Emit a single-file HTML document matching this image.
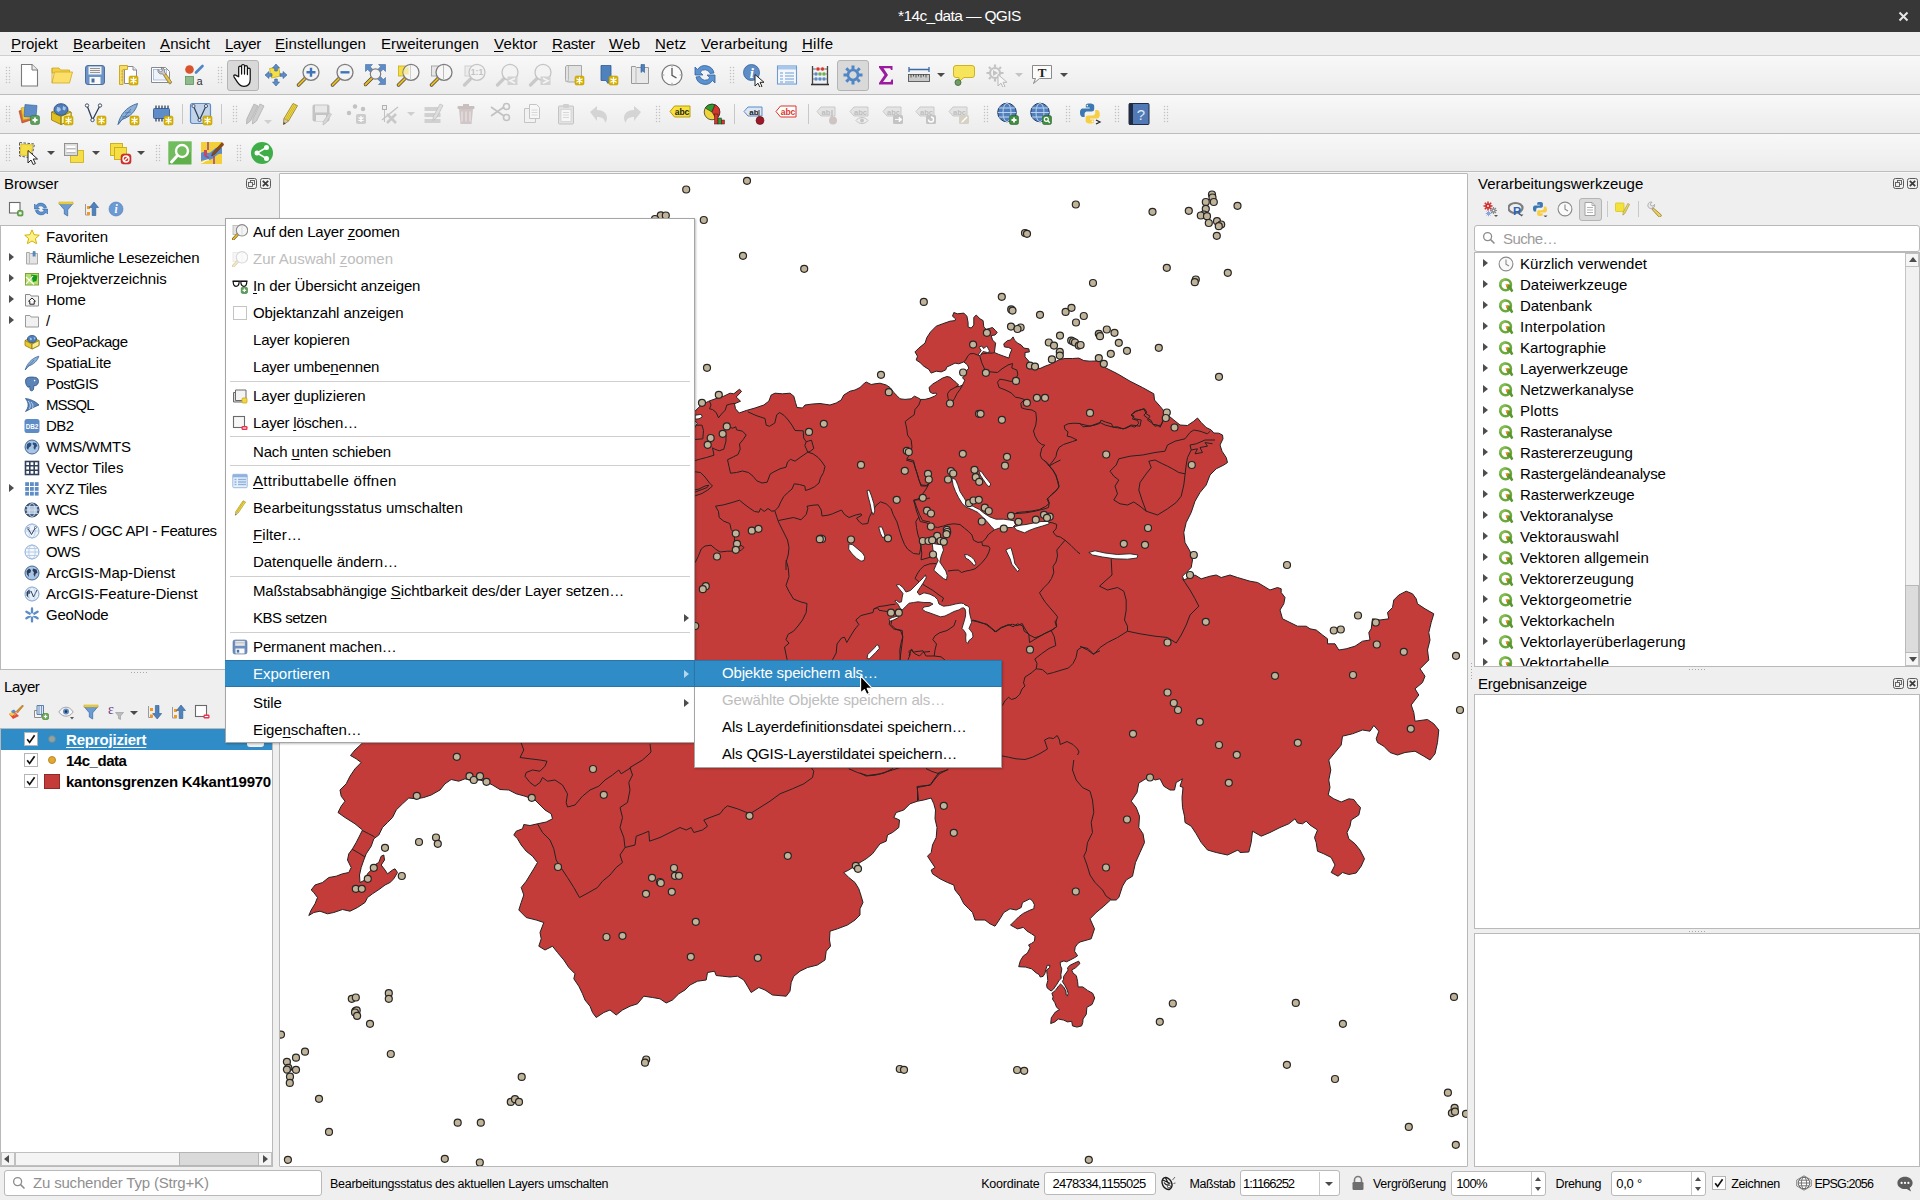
<!DOCTYPE html>
<html lang="de"><head><meta charset="utf-8"><title>*14c_data — QGIS</title>
<style>
*{box-sizing:border-box;margin:0;padding:0}
html,body{width:1920px;height:1200px;overflow:hidden;background:#efefef;font-family:"Liberation Sans",sans-serif;font-size:15px;color:#000;}
body{position:relative}
.a{position:absolute;white-space:nowrap}
u{text-decoration:underline;text-underline-offset:2px;text-decoration-thickness:1px}
#title{left:0;top:0;width:1920px;height:32px;background:#373737;color:#fff;text-align:center;line-height:31px;font-size:15.5px}
#menubar{left:0;top:32px;width:1920px;height:24px;background:#efefef;border-bottom:1px solid #cfcfcf}
#menubar span{position:absolute;top:3px;font-size:15px;line-height:18px}
.tb{left:0;width:1920px;height:39px;background:linear-gradient(#f8f8f8,#ececec);border-bottom:1px solid #bdbdbd}
.grip{position:absolute;width:6px;height:18px;background-image:radial-gradient(circle,#c2c2c2 0.75px,transparent 1.05px);background-size:3px 3px}
.ic{position:absolute;width:24px;height:24px}
.ic16{position:absolute;width:16px;height:16px}
.tsep{position:absolute;width:1px;height:20px;background:#c8c8c8}
.pressed{position:absolute;background:#d9d9d9;border:1px solid #b4b4b4;border-radius:3px}
.dd{position:absolute;width:0;height:0;border-left:4px solid transparent;border-right:4px solid transparent;border-top:4px solid #4a4a4a}
.ptitle{font-size:15px;line-height:18px}
.tree{background:#fff;border:1px solid #b9b9b9}
.row{position:absolute;left:0;height:21px;line-height:21px;font-size:15px}
.arr{position:absolute;width:0;height:0;border-top:4px solid transparent;border-bottom:4px solid transparent;border-left:5px solid #4d4d4d}
.dockbtn{position:absolute;width:11px;height:11px;border:1px solid #555;border-radius:2px}
.menu{background:#fff;border:1px solid #a5a5a5;box-shadow:1px 1px 2px rgba(0,0,0,.25)}
.mi{position:absolute;left:27px;font-size:15px;line-height:18px;color:#000}
.mi.dis{color:#bdbdbd}
.msep{position:absolute;left:4px;right:4px;height:1px;background:#cfcfcf}
.sb{font-size:13px;line-height:16px}
.inp{background:#fff;border:1px solid #b9b9b9;border-radius:3px}
</style></head><body>

<div class="a" id="title"></div>
<div class="a" style="left:898px;top:7px;color:#fff;line-height:18px;font-size:15.5px;letter-spacing:-0.624px;">*14c_data — QGIS</div>
<svg class="a" style="left:1898px;top:11px" width="11" height="11" viewBox="0 0 11 11"><path d="M1.5 1.5L9.5 9.5M9.5 1.5L1.5 9.5" stroke="#e6e6e6" stroke-width="2" fill="none"/></svg>
<div class="a" id="menubar"><span style="left:11px;font-size:15px;letter-spacing:0.002px;"><u>P</u>rojekt</span><span style="left:73px;font-size:15px;letter-spacing:0.015px;"><u>B</u>earbeiten</span><span style="left:160px;font-size:15px;letter-spacing:0.116px;"><u>A</u>nsicht</span><span style="left:225px;font-size:15px;letter-spacing:-0.304px;"><u>L</u>ayer</span><span style="left:275px;font-size:15px;letter-spacing:0.072px;"><u>E</u>instellungen</span><span style="left:381px;font-size:15px;letter-spacing:0.098px;">Er<u>w</u>eiterungen</span><span style="left:494px;font-size:15px;letter-spacing:0.196px;"><u>V</u>ektor</span><span style="left:552px;font-size:15px;letter-spacing:-0.197px;"><u>R</u>aster</span><span style="left:609px;font-size:15px;letter-spacing:0.310px;"><u>W</u>eb</span><span style="left:655px;font-size:15px;letter-spacing:0.114px;"><u>N</u>etz</span><span style="left:701px;font-size:15px;letter-spacing:0.136px;"><u>V</u>erarbeitung</span><span style="left:802px;font-size:15px;letter-spacing:0.258px;"><u>H</u>ilfe</span></div>
<div class="a tb" style="top:56px;height:39px"></div>
<div class="a tb" style="top:95px;height:39px"></div>
<div class="a tb" style="top:134px;height:38px"></div>
<div class="a" style="left:0;top:172px;width:1920px;height:1px;background:#f6f6f6"></div>
<div class="grip" style="left:5px;top:66px"></div>
<svg class="ic" style="left:17px;top:63px" viewBox="0 0 24 24"><path d="M4.500 1.500h10.500l5.500 5.500v16h-16z" fill="#fff" stroke="#7a7a7a" stroke-width="1.100"/><path d="M15 1.500v5.500h5.500" fill="#ececec" stroke="#7a7a7a" stroke-width="1"/></svg>
<svg class="ic" style="left:50px;top:63px" viewBox="0 0 24 24"><path d="M2 5h7l1.500 2h9v3h-17.500z" fill="#f2cf4a" stroke="#d1a91c" stroke-width=".8"/><path d="M2 20l2.500-11h18l-3 11z" fill="#fbdf6a" stroke="#d1a91c" stroke-width=".8"/><path d="M2 5v15" stroke="#d1a91c" stroke-width=".8"/></svg>
<svg class="ic" style="left:83px;top:63px" viewBox="0 0 24 24"><rect x="2.500" y="2.500" width="19" height="19" rx="2.500" fill="#6c93c7" stroke="#4a6f9f" stroke-width="1"/><rect x="5.500" y="3.500" width="13" height="8" fill="#f1f1f1"/><path d="M7 5.500h10M7 7.500h10M7 9.500h10" stroke="#8a8a8a" stroke-width=".9"/><rect x="6.500" y="14" width="11" height="7" fill="#fafafa"/><rect x="8.500" y="15.500" width="3" height="4" fill="#4a6f9f"/></svg>
<svg class="ic" style="left:116px;top:63px" viewBox="0 0 24 24"><path d="M8.500 3.500h8.500l3.500 3.500v13.500h-12z" fill="#fff" stroke="#8a8a8a"/><path d="M17 3.500v3.500h3.500" fill="#eee" stroke="#8a8a8a"/><path d="M3.500 2.500h8v4h-4.500v15h-3.500z" fill="#f6dd6a" stroke="#c9a417" stroke-width=".9"/><path d="M5 8h2M5 11h2M5 14h2M5 17h2" stroke="#c9a417" stroke-width=".8"/><rect x="13" y="13" width="9" height="9" rx="1.600" fill="#d9b300" stroke="#b39400" stroke-width=".5"/><g stroke="#fff" stroke-width="1.400" stroke-linecap="round"><path d="M17.5 14.5V20.5M14.9 16.0L20.1 19.0M20.1 16.0L14.9 19.0"/></g></svg>
<svg class="ic" style="left:149px;top:63px" viewBox="0 0 24 24"><path d="M2.500 4.500h14l4 4v11h-18z" fill="#fff" stroke="#8a8a8a"/><rect x="4.500" y="6.500" width="13" height="10.500" fill="#eef2fb" stroke="#9db3dd" stroke-width=".8"/><path d="M9 6.500a3.500 3.500 0 0 0 4.500 4.300L20 20.500a1.500 1.500 0 0 0 2.200-2L15.500 9A3.500 3.500 0 0 0 12 4.500L13.500 7.500 11.500 9z" fill="#c8c8c8" stroke="#6a6a6a" stroke-width=".7"/><path d="M15 12.500l5 7.500a1.500 1.500 0 0 0 2.200-1.500L17 11z" fill="#e8c44a" stroke="#9a7d1c" stroke-width=".6"/></svg>
<svg class="ic" style="left:182px;top:63px" viewBox="0 0 24 24"><circle cx="7.500" cy="6.500" r="4.300" fill="#d9532c"/><path d="M14 9.500L20.500 3" stroke="#4f86c6" stroke-width="2.600" stroke-linecap="round"/><rect x="3.500" y="13.500" width="8" height="8" fill="#8dbb8d" stroke="#5c935c" stroke-width=".8"/><text x="14.500" y="21.500" font-family="Liberation Sans" font-size="11" fill="#333">a</text></svg>
<div class="grip" style="left:217px;top:66px"></div>
<div class="pressed" style="left:227px;top:60px;width:32px;height:31px"></div>
<svg class="ic" style="left:231px;top:63px" viewBox="0 0 24 24"><g transform="translate(-1.5 -1.3) scale(1.12)"><path d="M8.200 13.500V5.200a1.300 1.300 0 0 1 2.600 0V11V3.800a1.300 1.300 0 0 1 2.600 0V11V4.800a1.300 1.300 0 0 1 2.600 0V11.500V7a1.250 1.250 0 0 1 2.500 0v9c0 3.500-2 6-5.500 6-3 0-4.300-1.200-5.800-3.500L4 13.500c-.7-1.300.8-2.300 1.800-1.300z" fill="#fff" stroke="#111" stroke-width="1.100" stroke-linejoin="round"/></g></svg>
<svg class="ic" style="left:264px;top:63px" viewBox="0 0 24 24"><path d="M5.500 5.500l9-1.500 2 9-9 2z" fill="#f5de46" stroke="#c9ad12" stroke-width=".8"/><g fill="#5d8cc6" stroke="#335f99" stroke-width=".6"><path d="M12 1l3.500 4h-2.200v3h-2.600v-3H8.500z"/><path d="M12 23l3.500-4h-2.200v-3h-2.600v3H8.500z"/><path d="M1 12l4-3.500v2.200h3v2.600h-3v2.200z"/><path d="M23 12l-4-3.500v2.200h-3v2.600h3v2.200z"/></g></svg>
<svg class="ic" style="left:296px;top:63px" viewBox="0 0 24 24"><path d="M9 15.500L2.500 22" stroke="#3a3a3a" stroke-width="3.400" stroke-linecap="round"/><path d="M9 15.500L2.500 22" stroke="#e8b923" stroke-width="2.200" stroke-linecap="round"/><circle cx="15" cy="9.300" r="8" fill="#f3f3f3" stroke="#7c7c7c" stroke-width="1.300"/><path d="M15 4.800v9M10.500 9.300h9" stroke="#3f74b8" stroke-width="2.400"/></svg>
<svg class="ic" style="left:330px;top:63px" viewBox="0 0 24 24"><path d="M9 15.500L2.500 22" stroke="#3a3a3a" stroke-width="3.400" stroke-linecap="round"/><path d="M9 15.500L2.500 22" stroke="#e8b923" stroke-width="2.200" stroke-linecap="round"/><circle cx="15" cy="9.300" r="8" fill="#f3f3f3" stroke="#7c7c7c" stroke-width="1.300"/><path d="M10.500 9.300h9" stroke="#3f74b8" stroke-width="2.400"/></svg>
<svg class="ic" style="left:363px;top:63px" viewBox="0 0 24 24"><g fill="#5d8cc6" stroke="#335f99" stroke-width=".5"><path d="M2.500 1.500h7l-2.300 2.300 3.300 3.300-2.600 2.600-3.300-3.300-2.100 2.100z"/><path d="M22.500 1.500v7l-2.300-2.300-3.300 3.300-2.600-2.600 3.300-3.300-2.100-2.100z"/><path d="M22.500 21.500h-7l2.300-2.300-3.300-3.300 2.600-2.600 3.300 3.300 2.100-2.100z"/></g><path d="M9.500 14.500L2.500 21.500" stroke="#3a3a3a" stroke-width="3.400" stroke-linecap="round"/><path d="M9.500 14.500L2.500 21.500" stroke="#e8b923" stroke-width="2.200" stroke-linecap="round"/><circle cx="12.500" cy="11" r="5.200" fill="#f3f3f3" stroke="#7c7c7c" stroke-width="1.200"/></svg>
<svg class="ic" style="left:396px;top:63px" viewBox="0 0 24 24"><rect x="2.500" y="3" width="10" height="10" fill="#f5de46" stroke="#c9ad12" stroke-width=".8"/><path d="M9 15.500L2.500 22" stroke="#3a3a3a" stroke-width="3.400" stroke-linecap="round"/><path d="M9 15.500L2.500 22" stroke="#e8b923" stroke-width="2.200" stroke-linecap="round"/><circle cx="15" cy="9.300" r="8" fill="#f6f6f6" stroke="#7c7c7c" stroke-width="1.300"/><path d="M14.500 2v14" stroke="#cfcfcf" stroke-width="1"/><path d="M7.600 7a7.300 7.300 0 0 0 0 4.500h5V3.500z" fill="#f5e78a" opacity=".8"/></svg>
<svg class="ic" style="left:429px;top:63px" viewBox="0 0 24 24"><rect x="2.500" y="3" width="10" height="10" fill="#e6e6e6" stroke="#9a9a9a" stroke-width=".8"/><path d="M9 15.500L2.500 22" stroke="#3a3a3a" stroke-width="3.400" stroke-linecap="round"/><path d="M9 15.500L2.500 22" stroke="#e8b923" stroke-width="2.200" stroke-linecap="round"/><circle cx="15" cy="9.300" r="8" fill="#f6f6f6" stroke="#7c7c7c" stroke-width="1.300"/><path d="M14.500 2v14" stroke="#bdbdbd" stroke-width="1"/></svg>
<svg class="ic" style="left:462px;top:63px" viewBox="0 0 24 24"><rect x="3" y="3" width="10" height="10" fill="#ececec" stroke="#d0d0d0"/><path d="M9 15.500L2.500 22" stroke="#c9c9c9" stroke-width="3.200" stroke-linecap="round"/><circle cx="15" cy="9.300" r="8" fill="#f3f3f3" stroke="#c4c4c4" stroke-width="1.300"/><text x="15" y="12.300" font-family="Liberation Sans" font-weight="bold" font-size="8.500" text-anchor="middle" fill="#c2c2c2">1:1</text></svg>
<svg class="ic" style="left:495px;top:63px" viewBox="0 0 24 24"><path d="M9 15.500L2.500 22" stroke="#c9c9c9" stroke-width="3.200" stroke-linecap="round"/><circle cx="15" cy="9.300" r="8" fill="#f3f3f3" stroke="#c4c4c4" stroke-width="1.300"/><rect x="12.500" y="13.500" width="10" height="8.500" fill="#d2d2d2"/><path d="M20 15.300l-5 2.500 5 2.500" stroke="#f4f4f4" stroke-width="1.700" fill="none"/></svg>
<svg class="ic" style="left:528px;top:63px" viewBox="0 0 24 24"><path d="M9 15.500L2.500 22" stroke="#c9c9c9" stroke-width="3.200" stroke-linecap="round"/><circle cx="15" cy="9.300" r="8" fill="#f3f3f3" stroke="#c4c4c4" stroke-width="1.300"/><rect x="12.500" y="13.500" width="10" height="8.500" fill="#d2d2d2"/><path d="M15 15.300l5 2.500-5 2.500" stroke="#f4f4f4" stroke-width="1.700" fill="none"/></svg>
<svg class="ic" style="left:562px;top:63px" viewBox="0 0 24 24"><path d="M5 2.500h14.500v16.500H7c-2.500 0-3.500-1-3.500-2.500V5c0-1.500.5-2.500 1.500-2.500z" fill="#e2e2e2" stroke="#a0a0a0" stroke-width=".9"/><path d="M6.500 2.500v14c0 1.500-1 2-3 2" fill="none" stroke="#b4b4b4" stroke-width=".9"/><rect x="13" y="13" width="9" height="9" rx="1.600" fill="#d9b300" stroke="#b39400" stroke-width=".5"/><g stroke="#fff" stroke-width="1.400" stroke-linecap="round"><path d="M17.5 14.5V20.5M14.9 16.0L20.1 19.0M20.1 16.0L14.9 19.0"/></g></svg>
<svg class="ic" style="left:596px;top:63px" viewBox="0 0 24 24"><path d="M5 2.500h10v14l-3 4-2-3H5z" fill="#4f82bd" stroke="#2d5a94" stroke-width=".8"/><rect x="13" y="13" width="9" height="9" rx="1.600" fill="#d9b300" stroke="#b39400" stroke-width=".5"/><g stroke="#fff" stroke-width="1.400" stroke-linecap="round"><path d="M17.5 14.5V20.5M14.9 16.0L20.1 19.0M20.1 16.0L14.9 19.0"/></g></svg>
<svg class="ic" style="left:628px;top:63px" viewBox="0 0 24 24"><path d="M3.500 3.500h4l1 1h12v16h-17z" fill="#e8e8e8" stroke="#9a9a9a"/><path d="M8 4v16.500" stroke="#b9b9b9"/><path d="M13 1.500h3.500v8l-1.750-1.500L13 9.500z" fill="#4f82bd" stroke="#2d5a94" stroke-width=".6"/></svg>
<svg class="ic" style="left:660px;top:63px" viewBox="0 0 24 24"><circle cx="12" cy="12" r="10" fill="#fafafa" stroke="#7a7a7a" stroke-width="1.200"/><path d="M12 5v7.300l4.500 2.700" fill="none" stroke="#555" stroke-width="1.300"/><g stroke="#9a9a9a" stroke-width="1"><path d="M12 2.800v1.500M12 19.700v1.500M2.800 12h1.500M19.700 12h1.500"/></g></svg>
<svg class="ic" style="left:693px;top:63px" viewBox="0 0 24 24"><path d="M21 10A9.200 9.200 0 0 0 4.500 6.500L2 4v8h8L7.200 9.200A5.500 5.500 0 0 1 17 10.500z" fill="#5b92d0" stroke="#2f62a1" stroke-width=".8"/><path d="M3 14a9.200 9.200 0 0 0 16.500 3.500L22 20v-8h-8l2.800 2.800A5.500 5.500 0 0 1 7 13.500z" fill="#5b92d0" stroke="#2f62a1" stroke-width=".8"/></svg>
<div class="grip" style="left:729px;top:66px"></div>
<div class="pressed" style="left:837px;top:60px;width:32px;height:31px"></div>
<svg class="ic" style="left:742px;top:63px" viewBox="0 0 24 24"><circle cx="9.500" cy="9.500" r="8" fill="#5d8cc6" stroke="#335f99" stroke-width=".8"/><text x="9.800" y="15" font-family="Liberation Serif" font-style="italic" font-weight="bold" font-size="15" fill="#fff" text-anchor="middle">i</text><path d="M13 11.500V23l3-2.800 2 4.300 2-1-2-4.200h4z" fill="#fff" stroke="#222" stroke-width="1"/></svg>
<svg class="ic" style="left:775px;top:63px" viewBox="0 0 24 24"><rect x="2.500" y="3" width="19" height="18" fill="#f4f8fd" stroke="#6f9bd3" stroke-width="1.100"/><rect x="3" y="3.500" width="18" height="3" fill="#a9c7ea"/><g stroke="#6f9bd3" stroke-width="1.200"><path d="M5 10h3M10 10h9M5 13h3M10 13h9M5 16h3M10 16h9M5 19h3M10 19h9"/></g></svg>
<svg class="ic" style="left:808px;top:63px" viewBox="0 0 24 24"><path d="M3 21.500h18" stroke="#333" stroke-width="1.600"/><path d="M4.500 3v18M19.500 3v18" stroke="#444" stroke-width="1.300"/><path d="M4.500 6h15M4.500 11h15M4.500 16h15" stroke="#555" stroke-width=".9"/><g stroke="#fff" stroke-width=".4"><circle cx="10" cy="6" r="2" fill="#d9342b"/><circle cx="14.500" cy="6" r="2" fill="#d9342b"/><circle cx="8" cy="11" r="2" fill="#5d8cc6"/><circle cx="12" cy="11" r="2" fill="#6fae58"/><circle cx="16" cy="11" r="2" fill="#6fae58"/><circle cx="8" cy="16" r="2" fill="#5d8cc6"/><circle cx="12" cy="16" r="2" fill="#5d8cc6"/><circle cx="16" cy="16" r="2" fill="#5d8cc6"/></g></svg>
<svg class="ic" style="left:841px;top:63px" viewBox="0 0 24 24"><g transform="translate(12 12)" fill="none" stroke="#4f86c6" stroke-width="2.600"><circle r="5"/><path d="M0-9.500V-6M0 9.500V6M9.500 0H6M-9.500 0H-6M6.700-6.700L4.300-4.300M-6.700 6.700L-4.300 4.300M6.700 6.700L4.300 4.300M-6.700-6.700L-4.300-4.300" stroke-width="3"/></g><circle cx="12" cy="12" r="2.200" fill="#d9d9d9"/></svg>
<svg class="ic" style="left:874px;top:63px" viewBox="0 0 24 24"><path d="M5 3h13.500v4h-1.500l-.8-1.800H9.500L14 12l-5 7h7.500l1-2.500H19V21.500H5V20l5.500-8L5 4.500z" fill="#9a1aa0"/></svg>
<svg class="ic" style="left:907px;top:63px" viewBox="0 0 24 24"><rect x="1.500" y="11.500" width="21" height="7" fill="#c9c9c9" stroke="#555" stroke-width=".9"/><path d="M4 11.500v3M6.500 11.500v2M9 11.500v3M11.500 11.500v2M14 11.500v3M16.500 11.500v2M19 11.500v3" stroke="#333" stroke-width=".8"/><path d="M2 6.500h20M2 4v5M22 4v5" stroke="#3b6aa6" stroke-width="1.300"/></svg>
<svg class="ic" style="left:952px;top:63px" viewBox="0 0 24 24"><path d="M4 2.500h16a2.500 2.500 0 0 1 2.500 2.500v7a2.500 2.500 0 0 1-2.500 2.500h-8l-5 4v-4H4A2.500 2.500 0 0 1 1.500 12V5A2.500 2.500 0 0 1 4 2.500z" fill="#f6e45a" stroke="#c9ad12" stroke-width=".9"/><circle cx="6" cy="19.500" r="3" fill="#6f9f5f" stroke="#3f5f3f" stroke-width=".8"/></svg>
<svg class="ic" style="left:985px;top:63px" viewBox="0 0 24 24" opacity="0.45"><g transform="translate(10 10)" fill="none" stroke="#8a8a8a" stroke-width="2.200"><circle r="5"/><path d="M0-8.500V-6M0 8.500V6M8.500 0H6M-8.500 0H-6M6-6L4.300-4.300M-6 6L-4.300 4.300M6 6L4.300 4.300M-6-6L-4.300-4.300"/></g><path d="M8 7l5 3-5 3z" fill="#8a8a8a"/><path d="M13 11.500V23l3-2.800 2 4.300 2-1-2-4.200h4z" fill="#fff" stroke="#777" stroke-width="1"/></svg>
<svg class="ic" style="left:1030px;top:63px" viewBox="0 0 24 24"><path d="M2.500 2.500h19v13h-12l-6 5 2-5h-3z" fill="#fbfbfb" stroke="#8a8a8a" stroke-width="1"/><text x="12" y="13.500" font-family="Liberation Serif" font-weight="bold" font-size="13" text-anchor="middle" fill="#222">T</text></svg>
<div class="dd" style="left:937px;top:73px;border-top-color:#4a4a4a"></div>
<div class="dd" style="left:1015px;top:73px;border-top-color:#c4c4c4"></div>
<div class="dd" style="left:1060px;top:73px;border-top-color:#4a4a4a"></div>
<div class="grip" style="left:5px;top:105px"></div>
<svg class="ic" style="left:17px;top:102px" viewBox="0 0 24 24"><path d="M2 9l9-3 3 12-9 3z" fill="#d9623a" stroke="#a8421f" stroke-width=".6"/><path d="M4 6l10-2 2 12-10 2z" fill="#f0c93a" stroke="#b8951a" stroke-width=".6"/><path d="M8 2.500l12 1-1 12-12-1z" fill="#5d8cc6" stroke="#335f99" stroke-width=".6"/><rect x="13.500" y="13.500" width="9" height="9" rx="1.800" fill="#5aa05a" stroke="#2f6f2f" stroke-width=".5"/><path d="M18 15.500v5M15.500 18h5" stroke="#fff" stroke-width="1.800"/></svg>
<svg class="ic" style="left:50px;top:102px" viewBox="0 0 24 24"><path d="M1.500 10L11 6l10 4v8L11 22.500 1.500 18z" fill="#e2bf1f" stroke="#8f7a10" stroke-width=".8"/><path d="M11 14.500l10-4.500v8L11 22.500z" fill="#f9ef94" stroke="#8f7a10" stroke-width=".8"/><path d="M1.500 10L11 14.500v8" fill="none" stroke="#8f7a10" stroke-width=".8"/><ellipse cx="11" cy="7.500" rx="7" ry="5.800" fill="#4d7cb8" stroke="#2e4f7e" stroke-width=".9"/><path d="M7 5l3 .5 1 2.500-2.500 2-2-1.500zM13 4l3 1.500-1 3-2.500-1z" fill="#a9c7ea"/><rect x="14" y="14" width="9" height="9" rx="1.600" fill="#d9b300" stroke="#b39400" stroke-width=".5"/><g stroke="#fff" stroke-width="1.400" stroke-linecap="round"><path d="M18.5 15.5V21.5M15.9 17.0L21.1 20.0M21.1 17.0L15.9 20.0"/></g></svg>
<svg class="ic" style="left:83px;top:102px" viewBox="0 0 24 24"><path d="M4 3.500l5.500 14.500L17 3.500" fill="none" stroke="#2e3f5c" stroke-width="1.300"/><circle cx="4" cy="3.500" r="1.700" fill="#fff" stroke="#2e3f5c" stroke-width=".9"/><circle cx="17" cy="3.500" r="1.700" fill="#fff" stroke="#2e3f5c" stroke-width=".9"/><circle cx="9.500" cy="18" r="1.700" fill="#fff" stroke="#2e3f5c" stroke-width=".9"/><rect x="14" y="14" width="9" height="9" rx="1.600" fill="#d9b300" stroke="#b39400" stroke-width=".5"/><g stroke="#fff" stroke-width="1.400" stroke-linecap="round"><path d="M18.5 15.5V21.5M15.9 17.0L21.1 20.0M21.1 17.0L15.9 20.0"/></g></svg>
<svg class="ic" style="left:116px;top:102px" viewBox="0 0 24 24"><path d="M2 22.500C4 13 10 5 21.500 1.500 20 9 14 15 6 17.500z" fill="#8fb0d6" stroke="#3f6a9c" stroke-width=".9"/><path d="M2 22.500L15 7M6 15l7-1M9 11l6-1" stroke="#3f6a9c" stroke-width=".7" fill="none"/><rect x="14" y="14" width="9" height="9" rx="1.600" fill="#d9b300" stroke="#b39400" stroke-width=".5"/><g stroke="#fff" stroke-width="1.400" stroke-linecap="round"><path d="M18.5 15.5V21.5M15.9 17.0L21.1 20.0M21.1 17.0L15.9 20.0"/></g></svg>
<svg class="ic" style="left:150px;top:102px" viewBox="0 0 24 24"><rect x="3.500" y="6.500" width="16" height="10" rx="1" fill="#5d8cc6" stroke="#335f99" stroke-width=".9"/><path d="M6 6.500v-3M9 6.500v-3M12 6.500v-3M15 6.500v-3M18 6.500v-3M6 16.500v3M9 16.500v3M12 16.500v3M15 16.500v3" stroke="#33415a" stroke-width="1.300"/><rect x="14" y="14" width="9" height="9" rx="1.600" fill="#d9b300" stroke="#b39400" stroke-width=".5"/><g stroke="#fff" stroke-width="1.400" stroke-linecap="round"><path d="M18.5 15.5V21.5M15.9 17.0L21.1 20.0M21.1 17.0L15.9 20.0"/></g></svg>
<div class="tsep" style="left:182px;top:104px"></div>
<svg class="ic" style="left:189px;top:102px" viewBox="0 0 24 24"><rect x="1.500" y="1.500" width="20" height="20" rx="2" fill="#c3d3e8" stroke="#5d8cc6" stroke-width="1.200"/><path d="M4.500 4l6 14 6.500-14" fill="none" stroke="#2e3f5c" stroke-width="1.200"/><circle cx="4.500" cy="4" r="1.600" fill="#dfe8f4" stroke="#2e3f5c" stroke-width=".8"/><circle cx="17" cy="4" r="1.600" fill="#dfe8f4" stroke="#2e3f5c" stroke-width=".8"/><circle cx="10.500" cy="18" r="1.600" fill="#dfe8f4" stroke="#2e3f5c" stroke-width=".8"/><rect x="14" y="14" width="9" height="9" rx="1.600" fill="#d9b300" stroke="#b39400" stroke-width=".5"/><g stroke="#fff" stroke-width="1.400" stroke-linecap="round"><path d="M18.5 15.5V21.5M15.9 17.0L21.1 20.0M21.1 17.0L15.9 20.0"/></g></svg>
<div class="tsep" style="left:221px;top:104px"></div>
<div class="grip" style="left:232px;top:105px"></div>
<svg class="ic" style="left:245px;top:102px" viewBox="0 0 24 24"><path d="M9 2l4 2-7.500 15-4 3 .3-5z" fill="#c9c9c9" stroke="#aaa" stroke-width=".7"/><path d="M15 2l4 2-7.500 15-4 3 .3-5z" fill="#cfcfcf" stroke="#aaa" stroke-width=".7"/></svg>
<svg class="ic" style="left:278px;top:102px" viewBox="0 0 24 24"><path d="M15 1.500l4.500 2.200L10.500 19 5.500 22.500 6 16.500z" fill="#f0d94a" stroke="#8a7a2a" stroke-width=".8"/><path d="M16.500 2.300L7.500 17.500M18 3L9 18.300" stroke="#c5ab1a" stroke-width=".8"/><path d="M6 16.500l4.500 2.500-5 3.500z" fill="#d9c7b0" stroke="#8a7a2a" stroke-width=".5"/><path d="M5.500 22.500l.2-2.300 1.900 1z" fill="#333"/></svg>
<svg class="ic" style="left:310px;top:102px" viewBox="0 0 24 24" opacity="0.8"><rect x="2.500" y="2.500" width="17" height="17" rx="2" fill="#b9b9b9"/><rect x="5" y="3.500" width="12" height="7" fill="#e6e6e6"/><rect x="6" y="13" width="10" height="6" fill="#ededed"/><path d="M19 11l2.500 1.200L16 21l-3 2 .3-3.500z" fill="#cfcfcf" stroke="#aaa" stroke-width=".6"/></svg>
<svg class="ic" style="left:345px;top:102px" viewBox="0 0 24 24" opacity="0.9"><circle cx="4" cy="11" r="2.200" fill="#bdbdbd"/><circle cx="10" cy="4.500" r="2.200" fill="#bdbdbd"/><circle cx="18" cy="7" r="2.200" fill="#bdbdbd"/><rect x="11" y="12" width="10" height="10" rx="1.800" fill="#c9c9c9"/><g stroke="#fff" stroke-width="1.400"><path d="M16 14v6M13.400 15.500l5.200 3M18.600 15.500l-5.200 3"/></g></svg>
<svg class="ic" style="left:379px;top:102px" viewBox="0 0 24 24" opacity="0.9"><path d="M3 18L19 5" stroke="#bdbdbd" stroke-width="1.200"/><rect x="3.500" y="3.500" width="4" height="4" fill="#eee" stroke="#aaa"/><path d="M8 12l9 9M17 12l-9 9" stroke="#c4c4c4" stroke-width="2.600"/><path d="M5.500 8v12" stroke="#bdbdbd" stroke-width="1"/></svg>
<svg class="ic" style="left:422px;top:102px" viewBox="0 0 24 24" opacity="0.8"><rect x="2.500" y="5" width="16" height="4" fill="#c9c9c9"/><rect x="2.500" y="11" width="16" height="4" fill="#c9c9c9"/><rect x="2.500" y="17" width="16" height="4" fill="#c9c9c9"/><path d="M18 2l3 1.500L14.500 16l-3.500 2.500.3-4z" fill="#d9d9d9" stroke="#aaa" stroke-width=".6"/></svg>
<svg class="ic" style="left:454px;top:102px" viewBox="0 0 24 24" opacity="0.8"><path d="M5 7h14l-1.500 15h-11z" fill="#c9bcbc"/><path d="M8 9.500v10M12 9.500v10M16 9.500v10" stroke="#e6dede" stroke-width="1.300"/><rect x="3.500" y="4" width="17" height="3" rx="1" fill="#bfb2b2"/><rect x="9" y="2" width="6" height="2.500" fill="#bfb2b2"/></svg>
<svg class="ic" style="left:488px;top:102px" viewBox="0 0 24 24" opacity="0.9"><path d="M3 5l13 9M3 14L16 5" stroke="#bdbdbd" stroke-width="1.600"/><circle cx="18.500" cy="15.500" r="3" fill="none" stroke="#bdbdbd" stroke-width="1.600"/><circle cx="18.500" cy="4.500" r="3" fill="none" stroke="#bdbdbd" stroke-width="1.600" transform="translate(0 0)"/></svg>
<svg class="ic" style="left:520px;top:102px" viewBox="0 0 24 24"><path d="M4.500 6.500h8l3 3v11h-11z" fill="#f2f2f2" stroke="#c4c4c4"/><path d="M9.500 2.500h7l3 3v11h-10z" fill="#f7f7f7" stroke="#c4c4c4"/><path d="M11.500 8h6M11.500 10.500h6M11.500 13h6" stroke="#d4d4d4" stroke-width=".9"/></svg>
<svg class="ic" style="left:554px;top:102px" viewBox="0 0 24 24"><rect x="4.500" y="4" width="15" height="18" rx="1" fill="#e2e2e2" stroke="#c4c4c4"/><rect x="9" y="2" width="6" height="4" rx="1" fill="#d0d0d0"/><rect x="7" y="7.500" width="10" height="12" fill="#f7f7f7" stroke="#cfcfcf" stroke-width=".7"/><path d="M9 10.500h6M9 13h6M9 15.500h6" stroke="#d4d4d4" stroke-width=".9"/></svg>
<svg class="ic" style="left:587px;top:102px" viewBox="0 0 24 24"><path d="M3 10l7-6v4c6 0 10 3 10 8 0 2-1 4-2 5 0-4-3-6-8-6v4z" fill="#d4d4d4"/></svg>
<svg class="ic" style="left:620px;top:102px" viewBox="0 0 24 24"><path d="M21 10l-7-6v4C8 8 4 11 4 16c0 2 1 4 2 5 0-4 3-6 8-6v4z" fill="#d4d4d4"/></svg>
<div class="dd" style="left:264px;top:120px;border-top-color:#cfcfcf"></div>
<div class="dd" style="left:407px;top:112px;border-top-color:#cfcfcf"></div>
<div class="grip" style="left:655px;top:105px"></div>
<svg class="ic" style="left:668px;top:100px" viewBox="0 0 24 24"><path d="M2 11.500L6.500 6h15.500v11H6.500z" fill="#f7e13a" stroke="#b89d10" stroke-width="1"/><text x="14" y="15" font-family="Liberation Sans" font-weight="bold" font-size="8.500" text-anchor="middle" fill="#222">abc</text></svg>
<svg class="ic" style="left:702px;top:102px" viewBox="0 0 24 24"><circle cx="10" cy="10" r="7.800" fill="#f0d33a" stroke="#222" stroke-width=".7"/><path d="M10 10L3.200 6A7.800 7.800 0 0 1 13 2.800z" fill="#2f9a2f" stroke="#222" stroke-width=".6"/><path d="M10 10L13 2.800A7.800 7.800 0 0 1 14 16.700z" fill="#d9342b" stroke="#222" stroke-width=".6"/><rect x="12.500" y="12" width="3.500" height="10" fill="#d9342b" stroke="#222" stroke-width=".5"/><rect x="16" y="16" width="3.500" height="6" fill="#2f9a2f" stroke="#222" stroke-width=".5"/><rect x="19.500" y="18" width="3" height="4" fill="#d9342b" stroke="#222" stroke-width=".5"/></svg>
<div class="tsep" style="left:734px;top:104px"></div>
<svg class="ic" style="left:742px;top:102px" viewBox="0 0 24 24"><path d="M2 9.500L6 5h14v9H6z" fill="#dbe7f6" stroke="#5d8cc6" stroke-width="1"/><text x="12" y="12.500" font-family="Liberation Sans" font-weight="bold" font-size="8" text-anchor="middle" fill="#222">ab</text><path d="M17 8v9" stroke="#777" stroke-width="1.600"/><circle cx="18" cy="18.500" r="4" fill="#9a1a2a" stroke="#5f0f18" stroke-width=".6"/></svg>
<svg class="ic" style="left:774px;top:100px" viewBox="0 0 24 24"><path d="M2 11.500L6.500 6h15.500v11H6.500z" fill="#fff" stroke="#d9342b" stroke-width="1"/><text x="14" y="15" font-family="Liberation Sans" font-weight="bold" font-size="8.500" text-anchor="middle" fill="#d9342b">abc</text></svg>
<div class="tsep" style="left:808px;top:104px"></div>
<svg class="ic" style="left:815px;top:102px" viewBox="0 0 24 24"><path d="M2 9.500L6 5h14v9H6z" fill="#e4e4e4" stroke="#c9c9c9" stroke-width="1"/><text x="11" y="12.500" font-family="Liberation Sans" font-weight="bold" font-size="7.500" text-anchor="middle" fill="#bdbdbd">ab</text><path d="M17 8v9" stroke="#c4c4c4" stroke-width="1.600"/><circle cx="18" cy="18.500" r="4" fill="#cfc4c4"/></svg>
<svg class="ic" style="left:848px;top:102px" viewBox="0 0 24 24"><path d="M2 9.500L6 5h14v9H6z" fill="#e4e4e4" stroke="#c9c9c9" stroke-width="1"/><text x="12.500" y="12.500" font-family="Liberation Sans" font-weight="bold" font-size="7.500" text-anchor="middle" fill="#bdbdbd">abc</text><path d="M8 18.500c3-4 9-4 12 0-3 4-9 4-12 0z" fill="#eee" stroke="#bdbdbd" stroke-width=".9"/><circle cx="14" cy="18.500" r="2" fill="#c4c4c4"/></svg>
<svg class="ic" style="left:881px;top:102px" viewBox="0 0 24 24"><path d="M2 9.500L6 5h14v9H6z" fill="#e4e4e4" stroke="#c9c9c9" stroke-width="1"/><text x="12.500" y="12.500" font-family="Liberation Sans" font-weight="bold" font-size="7.500" text-anchor="middle" fill="#bdbdbd">abc</text><rect x="12" y="13" width="10" height="9" rx="1.500" fill="#c4c4c4"/><path d="M14 17.500h4v-2.500l3 2.500-3 2.500v-2.500z" fill="#fff" stroke="#fff" stroke-width=".6"/></svg>
<svg class="ic" style="left:914px;top:102px" viewBox="0 0 24 24"><path d="M2 9.500L6 5h14v9H6z" fill="#e4e4e4" stroke="#c9c9c9" stroke-width="1"/><text x="12.500" y="12.500" font-family="Liberation Sans" font-weight="bold" font-size="7.500" text-anchor="middle" fill="#bdbdbd">abc</text><rect x="12" y="13" width="10" height="9" rx="1.500" fill="#c4c4c4"/><path d="M14.500 17.500a2.500 2.500 0 1 0 2.500-2.500" fill="none" stroke="#fff" stroke-width="1.400"/></svg>
<svg class="ic" style="left:947px;top:102px" viewBox="0 0 24 24"><path d="M2 9.500L6 5h14v9H6z" fill="#e4e4e4" stroke="#c9c9c9" stroke-width="1"/><text x="12.500" y="12.500" font-family="Liberation Sans" font-weight="bold" font-size="7.500" text-anchor="middle" fill="#bdbdbd">abc</text><rect x="12" y="13" width="10" height="9" rx="1.500" fill="#d6d1c4"/><path d="M19.500 14.500L15 19l-1 2 2-1 4.500-4.500z" fill="#fff"/></svg>
<div class="grip" style="left:983px;top:105px"></div>
<svg class="ic" style="left:996px;top:102px" viewBox="0 0 24 24"><circle cx="11" cy="10.500" r="9.300" fill="#4f7fbd" stroke="#1f3a66" stroke-width="1"/><ellipse cx="11" cy="10.500" rx="4" ry="9.300" fill="none" stroke="#c5d8ef" stroke-width=".9"/><path d="M1.800 10.500h18.400M3 6h16M3 15h16" stroke="#c5d8ef" stroke-width=".9"/><path d="M3 4.500c3 2 13 2 16 0M3 16.500c3-2 13-2 16 0" fill="none" stroke="#9fb8da" stroke-width=".7"/><rect x="13.500" y="13.500" width="9" height="9" rx="1.800" fill="#3f8f3f" stroke="#1f4f1f" stroke-width=".5"/><path d="M18 15.500v5M15.500 18h5" stroke="#fff" stroke-width="1.800"/></svg>
<svg class="ic" style="left:1029px;top:102px" viewBox="0 0 24 24"><circle cx="11" cy="10.500" r="9.300" fill="#4f7fbd" stroke="#1f3a66" stroke-width="1"/><ellipse cx="11" cy="10.500" rx="4" ry="9.300" fill="none" stroke="#c5d8ef" stroke-width=".9"/><path d="M1.800 10.500h18.400M3 6h16M3 15h16" stroke="#c5d8ef" stroke-width=".9"/><path d="M3 4.500c3 2 13 2 16 0M3 16.500c3-2 13-2 16 0" fill="none" stroke="#9fb8da" stroke-width=".7"/><rect x="13.500" y="13.500" width="9" height="9" rx="1.800" fill="#3f8f3f" stroke="#1f4f1f" stroke-width=".5"/><circle cx="17.300" cy="17.300" r="2" fill="none" stroke="#fff" stroke-width="1.200"/><path d="M18.800 18.800l2 2" stroke="#fff" stroke-width="1.300"/></svg>
<div class="grip" style="left:1065px;top:105px"></div>
<svg class="ic" style="left:1078px;top:102px" viewBox="0 0 24 24"><path d="M11.500 1.500C7.500 1.500 7.800 3.300 7.800 3.300v2.300h3.900v.8H5.200S2 6 2 10.500s2.700 4.400 2.700 4.400h1.900v-2.600s-.1-2.700 2.700-2.700h4.300s2.600 0 2.600-2.500V4S16.600 1.500 11.500 1.500z" fill="#3c78b2"/><circle cx="9.300" cy="3.600" r=".8" fill="#fff"/><path d="M12.300 21.500c4 0 3.700-1.800 3.700-1.800v-2.300h-3.900v-.8h6.500s3.200.4 3.200-4.100-2.700-4.400-2.700-4.400h-1.900v2.600s.1 2.700-2.700 2.700h-4.300s-2.600 0-2.600 2.500V19s-.4 2.500 4.700 2.500z" fill="#f7cf46"/><circle cx="14.500" cy="19.400" r=".8" fill="#fff"/><path d="M18 18l4 2-4 2" fill="none" stroke="#222" stroke-width="1.200"/></svg>
<div class="grip" style="left:1114px;top:105px"></div>
<svg class="ic" style="left:1127px;top:102px" viewBox="0 0 24 24"><rect x="2" y="1.500" width="20" height="21" rx="1" fill="#5179b5" stroke="#1f2c44" stroke-width="1"/><rect x="2" y="1.500" width="4" height="21" fill="#1f2c44"/><text x="14" y="17.500" font-family="Liberation Sans" font-size="15" text-anchor="middle" fill="#dfe8f6">?</text></svg>
<div class="grip" style="left:1163px;top:105px"></div>
<div class="grip" style="left:5px;top:144px"></div>
<svg class="ic" style="left:18px;top:141px" viewBox="0 0 24 24"><path d="M3 3l12 1-2 11-11-1z" fill="#f5de46" stroke="#c9ad12" stroke-width=".7"/><path d="M1.500 1.500l15 1.500-3 14-12-2z" fill="none" stroke="#444" stroke-width=".9" stroke-dasharray="2.500 1.500"/><path d="M10 9.500V22l3-3 2.200 4.500 2.200-1-2.200-4.500h4.300z" fill="#fff" stroke="#222" stroke-width="1"/></svg>
<div class="dd" style="left:47px;top:151px;border-top-color:#4a4a4a"></div>
<svg class="ic" style="left:62px;top:141px" viewBox="0 0 24 24"><rect x="8.500" y="9.500" width="13" height="12" fill="#f5de46" stroke="#c9ad12" stroke-width=".8"/><rect x="2.500" y="2.500" width="13" height="12" fill="#dcdcdc" stroke="#8a8a8a" stroke-width=".9"/><path d="M4.500 6h9M4.500 10h9" stroke="#fff" stroke-width="2.600"/><path d="M4.500 6h9M4.500 10h9" stroke="#8a8a8a" stroke-width=".5" transform="translate(0 1.600)"/></svg>
<div class="dd" style="left:92px;top:151px;border-top-color:#4a4a4a"></div>
<svg class="ic" style="left:108px;top:141px" viewBox="0 0 24 24"><rect x="2.500" y="2.500" width="12" height="12" fill="#f5de46" stroke="#c9ad12" stroke-width=".9"/><rect x="6.500" y="6.500" width="12" height="12" fill="#f5de46" stroke="#c9ad12" stroke-width=".9"/><rect x="13" y="13" width="10" height="10" rx="2.500" fill="#d9342b" stroke="#9a1a14" stroke-width=".5"/><circle cx="18" cy="18" r="3" fill="none" stroke="#fff" stroke-width="1.300"/><path d="M16 20l4-4" stroke="#fff" stroke-width="1.300"/></svg>
<div class="dd" style="left:137px;top:151px;border-top-color:#4a4a4a"></div>
<div class="grip" style="left:155px;top:144px"></div>
<svg class="ic" style="left:168px;top:141px" viewBox="0 0 24 24"><rect x=".5" y=".5" width="23" height="23" fill="#5fb04a"/><path d="M.5 .5h23v10L.5 20z" fill="#79c264" opacity=".7"/><circle cx="14" cy="10" r="6" fill="none" stroke="#fff" stroke-width="2.400"/><path d="M9.500 14.500L3.500 21" stroke="#fff" stroke-width="3" stroke-linecap="round"/></svg>
<svg class="ic" style="left:200px;top:141px" viewBox="0 0 24 24"><rect x="1" y="1" width="21" height="22" fill="#f3cf3a"/><path d="M1 12c4-3 6 2 10-1s5-6 11-4v6c-5-1-6 3-10 5s-7 0-11 2z" fill="#5d8cc6"/><path d="M8 1v8M4 14l5 3M14 15v8" stroke="#9a4a8a" stroke-width="1.600"/><rect x="4" y="9" width="3" height="6" fill="#c44a6a"/><path d="M22 1.500l2 2-9.500 10-3 1.500 1-3z" fill="#8a4a1a" stroke="#5a2a0a" stroke-width=".5"/><path d="M1 22c3-1 5-4 8-3" stroke="#fff" stroke-width="1.200" fill="none"/></svg>
<div class="grip" style="left:236px;top:144px"></div>
<svg class="ic" style="left:250px;top:141px" viewBox="0 0 24 24"><circle cx="12" cy="12" r="11" fill="#3fae49"/><g fill="#fff"><circle cx="16.500" cy="6.500" r="2.500"/><circle cx="7" cy="12" r="2.500"/><circle cx="16.500" cy="17.500" r="2.500"/></g><path d="M16.500 6.500L7 12l9.500 5.500" fill="none" stroke="#fff" stroke-width="1.600"/></svg>
<div class="a ptitle" style="left:4px;top:175px;font-size:15px;letter-spacing:-0.073px;">Browser</div>
<svg class="a" style="left:246px;top:178px" width="11" height="11" viewBox="0 0 11 11"><rect x=".5" y=".5" width="10" height="10" rx="2" fill="#efefef" stroke="#5a5a5a"/><rect x="4.5" y="2.5" width="4" height="4" fill="none" stroke="#5a5a5a" stroke-width=".9"/><rect x="2.5" y="4.5" width="4" height="4" fill="#efefef" stroke="#5a5a5a" stroke-width=".9"/></svg><svg class="a" style="left:260px;top:178px" width="11" height="11" viewBox="0 0 11 11"><rect x=".5" y=".5" width="10" height="10" rx="2" fill="#efefef" stroke="#5a5a5a"/><path d="M2.8 2.8L8.2 8.2M8.2 2.8L2.8 8.2" stroke="#3a3a3a" stroke-width="1.7"/></svg>
<svg class="ic16" style="left:8px;top:201px" viewBox="0 0 16 16"><rect x="1.500" y="1.500" width="10.500" height="10.500" fill="#fff" stroke="#6a6a6a" stroke-width="1.100"/><rect x="9.500" y="9.500" width="5.500" height="5.500" rx="1.200" fill="#6fae58" stroke="#3c7a2a" stroke-width=".6"/><circle cx="12.250" cy="12.250" r="1.400" fill="#dff0d6"/></svg>
<svg class="ic16" style="left:33px;top:201px" viewBox="0 0 16 16"><path d="M13.600 6.500A6 6 0 0 0 3 4.500L1.500 3v5h5L4.800 6.300A3.600 3.600 0 0 1 11 7z" fill="#5b92d0" stroke="#2f62a1" stroke-width=".6"/><path d="M2.400 9.500A6 6 0 0 0 13 11.500L14.500 13V8h-5l1.700 1.700A3.600 3.600 0 0 1 5 9z" fill="#5b92d0" stroke="#2f62a1" stroke-width=".6"/></svg>
<svg class="ic16" style="left:58px;top:201px" viewBox="0 0 16 16"><path d="M1 2.500h14L9.700 8.800V15L6.300 13V8.800z" fill="#6b9bd2" stroke="#3568a5" stroke-width=".7"/><rect x="1" y="1" width="14" height="2" fill="#f2d548" stroke="#c9a70c" stroke-width=".5"/></svg>
<svg class="ic16" style="left:83px;top:201px" viewBox="0 0 16 16"><path d="M2.500 3v11h4" fill="none" stroke="#9a9a9a" stroke-width="1"/><rect x="4" y="5" width="3" height="3" fill="#f39a1d"/><rect x="4" y="11" width="3" height="3" fill="#f39a1d"/><path d="M11 1L15.500 6.500H12.800V14.500H9.200V6.500H6.500z" fill="#4f82bd" stroke="#2d5a94" stroke-width=".6"/></svg>
<svg class="ic16" style="left:108px;top:201px" viewBox="0 0 16 16"><circle cx="8" cy="8" r="7" fill="#6c9bd3" stroke="#4a7ab6" stroke-width=".6"/><text x="8.200" y="12.300" font-family="Liberation Serif" font-style="italic" font-weight="bold" font-size="11.500" fill="#fff" text-anchor="middle">i</text></svg>
<div class="a tree" style="left:0;top:225px;width:273px;height:445px"></div>
<svg class="ic16" style="left:24px;top:229px" viewBox="0 0 16 16"><path d="M8 .9l2.1 4.8 5.2.5-3.9 3.4 1.2 5.1L8 12l-4.6 2.7 1.2-5.1L.7 6.2l5.2-.5z" fill="#fdf28a" stroke="#d4b106" stroke-width="1"/></svg>
<div class="row" style="left:46px;top:226px;font-size:15px;letter-spacing:-0.047px;">Favoriten</div>
<div class="arr" style="left:9px;top:253px"></div>
<svg class="ic16" style="left:24px;top:250px" viewBox="0 0 16 16"><path d="M2.5 2.5h3l1 1h7v10.5h-11z" fill="#e4e4e4" stroke="#a9a9a9"/><path d="M5.5 3v10.5" stroke="#b9b9b9"/><path d="M9 1.5h2.2v5L10.1 5.6 9 6.5z" fill="#5b8fc7" stroke="#3f6fa3" stroke-width=".5"/></svg>
<div class="row" style="left:46px;top:247px;font-size:15px;letter-spacing:-0.289px;">Räumliche Lesezeichen</div>
<div class="arr" style="left:9px;top:274px"></div>
<svg class="ic16" style="left:24px;top:271px" viewBox="0 0 16 16"><rect x="1.5" y="2.5" width="13" height="11.5" fill="#b7dd6f" stroke="#7ba438"/><path d="M7 3.5l6.5 1-1 5.5-3.5 1z" fill="#0f9a1e"/><path d="M2 13L9 5M2 6l8 7.5" stroke="#fff" stroke-width="1.1" fill="none"/></svg>
<div class="row" style="left:46px;top:268px;font-size:15px;letter-spacing:-0.056px;">Projektverzeichnis</div>
<div class="arr" style="left:9px;top:295px"></div>
<svg class="ic16" style="left:24px;top:292px" viewBox="0 0 16 16"><path d="M1.5 2.5h4.5l1 1.5h7.5v10h-13z" fill="#f4f4f4" stroke="#8a8a8a"/><path d="M8 6L4.6 9.2h1.2v3h4.4v-3h1.2z" fill="#fff" stroke="#222" stroke-width="1"/></svg>
<div class="row" style="left:46px;top:289px;font-size:15px;letter-spacing:-0.078px;">Home</div>
<div class="arr" style="left:9px;top:316px"></div>
<svg class="ic16" style="left:24px;top:313px" viewBox="0 0 16 16"><path d="M1.5 2.5h4.5l1 1.5h7.5v10h-13z" fill="#f1f1f1" stroke="#9a9a9a"/></svg>
<div class="row" style="left:46px;top:310px;font-size:15px;letter-spacing:0.000px;">/</div>
<svg class="ic16" style="left:24px;top:334px" viewBox="0 0 16 16"><path d="M1 6.5L8 3l7 3.5v5L8 15l-7-3.5z" fill="#e9c92b" stroke="#8f7a10" stroke-width=".8"/><path d="M1 6.5L8 10l7-3.5M8 10v5" stroke="#8f7a10" stroke-width=".8" fill="none"/><path d="M8 10l7-3.5v5L8 15z" fill="#f8ee8e" stroke="#8f7a10" stroke-width=".8"/><ellipse cx="8" cy="5" rx="4.6" ry="3.6" fill="#4d7cb8" stroke="#2e4f7e" stroke-width=".8"/><path d="M5.5 3.5l2 .5.5 1.5-1.5 1zM9.5 3l2 1-1 2z" fill="#a9c7ea"/></svg>
<div class="row" style="left:46px;top:331px;font-size:15px;letter-spacing:-0.523px;">GeoPackage</div>
<svg class="ic16" style="left:24px;top:355px" viewBox="0 0 16 16"><path d="M1.2 15C3 9 7 3.5 14.8 1.2 13.5 6 9.5 9.5 4 11.2z" fill="#8fb0d6" stroke="#3f6a9c" stroke-width=".8"/><path d="M1.2 15L10 5" stroke="#3f6a9c" stroke-width=".7" fill="none"/></svg>
<div class="row" style="left:46px;top:352px;font-size:15px;letter-spacing:-0.162px;">SpatiaLite</div>
<svg class="ic16" style="left:24px;top:376px" viewBox="0 0 16 16"><path d="M4 1.5C1.5 2 1 5 2 8c.6 2 1.6 3.3 2.6 3.2.5-.1.7-.8 1-1.2l.4 3.5c.2 1.6 2.6 1.9 3.4.2l.6-4.2c1.6.6 3.4-.3 4.2-2.500C15.200 4 13.5 1.200 10.500 1.300 8.500 1 6.500.8 4 1.500z" fill="#5a84b8" stroke="#2d4f80" stroke-width=".8"/><circle cx="10.600" cy="4.600" r=".8" fill="#fff"/></svg>
<div class="row" style="left:46px;top:373px;font-size:15px;letter-spacing:-0.551px;">PostGIS</div>
<svg class="ic16" style="left:24px;top:397px" viewBox="0 0 16 16"><path d="M1.5 1.5C6 2 11 4 15 8c-4 1.500-8 3.500-13.500 6.500C5 10 5 6 1.500 1.500z" fill="#5b86bb" stroke="#2f5587" stroke-width=".8"/><path d="M4 4c2.500 2 3 5 1.500 8M7 5c2 2 2.500 4 1.500 6" stroke="#cfe0f3" stroke-width=".8" fill="none"/></svg>
<div class="row" style="left:46px;top:394px;font-size:15px;letter-spacing:-0.963px;">MSSQL</div>
<svg class="ic16" style="left:24px;top:418px" viewBox="0 0 16 16"><rect x=".5" y="1" width="15" height="14" rx="2.500" fill="#5d8cc6"/><text x="8" y="10.600" font-family="Liberation Sans" font-size="6.300" fill="#fff" text-anchor="middle" font-weight="bold">DB2</text></svg>
<div class="row" style="left:46px;top:415px;font-size:15px;letter-spacing:-0.560px;">DB2</div>
<svg class="ic16" style="left:24px;top:439px" viewBox="0 0 16 16"><circle cx="8" cy="8" r="7" fill="#a9c5e6" stroke="#355b8c" stroke-width=".9"/><path d="M3 5l2.500-1.500 2 1-.5 2.500-2 1.500-1 2.500-1.500-2zM9 3.500l3 .5 1.500 3-1.500 1-1 3-1.500-2 .5-2.500-1.500-1.500z" fill="#2f4f7a"/></svg>
<div class="row" style="left:46px;top:436px;font-size:15px;letter-spacing:-0.243px;">WMS/WMTS</div>
<svg class="ic16" style="left:24px;top:460px" viewBox="0 0 16 16"><rect x="1.500" y="1.500" width="13" height="13" fill="#fff" stroke="#33415a" stroke-width="1.600"/><path d="M5.800 1.500v13M10.200 1.500v13M1.500 5.800h13M1.500 10.200h13" stroke="#33415a" stroke-width="1.600"/></svg>
<div class="row" style="left:46px;top:457px;font-size:15px;letter-spacing:-0.011px;">Vector Tiles</div>
<div class="arr" style="left:9px;top:484px"></div>
<svg class="ic16" style="left:24px;top:481px" viewBox="0 0 16 16"><rect x="1.2" y="1.2" width="3.800" height="3.800" fill="#5d8cc6"/><rect x="6.0" y="1.2" width="3.800" height="3.800" fill="#5d8cc6"/><rect x="10.799999999999999" y="1.2" width="3.800" height="3.800" fill="#5d8cc6"/><rect x="1.2" y="6.0" width="3.800" height="3.800" fill="#5d8cc6"/><rect x="6.0" y="6.0" width="3.800" height="3.800" fill="#5d8cc6"/><rect x="10.799999999999999" y="6.0" width="3.800" height="3.800" fill="#5d8cc6"/><rect x="1.2" y="10.799999999999999" width="3.800" height="3.800" fill="#5d8cc6"/><rect x="6.0" y="10.799999999999999" width="3.800" height="3.800" fill="#5d8cc6"/><rect x="10.799999999999999" y="10.799999999999999" width="3.800" height="3.800" fill="#5d8cc6"/></svg>
<div class="row" style="left:46px;top:478px;font-size:15px;letter-spacing:-0.387px;">XYZ Tiles</div>
<svg class="ic16" style="left:24px;top:502px" viewBox="0 0 16 16"><circle cx="8" cy="8" r="7" fill="#46668f" stroke="#1f2f47" stroke-width=".9"/><ellipse cx="8" cy="8" rx="3" ry="7" fill="none" stroke="#dce7f5" stroke-width=".8"/><path d="M1 8h14M2 4.500h12M2 11.500h12" stroke="#dce7f5" stroke-width=".8"/><rect x="3" y="5" width="10" height="6" fill="#dbe6f4" opacity=".75"/></svg>
<div class="row" style="left:46px;top:499px;font-size:15px;letter-spacing:-1.098px;">WCS</div>
<svg class="ic16" style="left:24px;top:523px" viewBox="0 0 16 16"><circle cx="8" cy="8" r="7" fill="#eef4fb" stroke="#7da2cf" stroke-width=".9"/><ellipse cx="8" cy="8" rx="3.200" ry="7" fill="none" stroke="#a9c4e3" stroke-width=".7"/><path d="M1 8h14" stroke="#a9c4e3" stroke-width=".7"/><path d="M4 5.500l3.500 6L11.500 4.500" fill="none" stroke="#2e3f5c" stroke-width="1"/><circle cx="4" cy="5.500" r="1" fill="#fff" stroke="#2e3f5c" stroke-width=".6"/><circle cx="11.500" cy="4.500" r="1" fill="#fff" stroke="#2e3f5c" stroke-width=".6"/></svg>
<div class="row" style="left:46px;top:520px;font-size:15px;letter-spacing:-0.389px;">WFS / OGC API - Features</div>
<svg class="ic16" style="left:24px;top:544px" viewBox="0 0 16 16"><circle cx="8" cy="8" r="7" fill="#f4f8fd" stroke="#7da2cf" stroke-width=".9"/><ellipse cx="8" cy="8" rx="3.200" ry="7" fill="none" stroke="#a9c4e3" stroke-width=".8"/><path d="M1 8h14M2.200 4.500h11.600M2.200 11.500h11.600" stroke="#a9c4e3" stroke-width=".8"/></svg>
<div class="row" style="left:46px;top:541px;font-size:15px;letter-spacing:-0.710px;">OWS</div>
<svg class="ic16" style="left:24px;top:565px" viewBox="0 0 16 16"><circle cx="8" cy="8" r="7" fill="#a9c5e6" stroke="#355b8c" stroke-width=".9"/><path d="M2.500 6l2.500-2.500 2 1.500-.5 2.500-2 1 .5 3.500-2-2.500zM9 3.500l3.500 1 1 3-2 1.500-.5 3-1.500-2.500.5-2-1.500-2z" fill="#2a3c58"/></svg>
<div class="row" style="left:46px;top:562px;font-size:15px;letter-spacing:-0.049px;">ArcGIS-Map-Dienst</div>
<svg class="ic16" style="left:24px;top:586px" viewBox="0 0 16 16"><circle cx="8" cy="8" r="7" fill="#e8f0fa" stroke="#6f97c8" stroke-width=".9"/><path d="M2.500 6l2.500-2.500 1.500 1.500-.5 2.500-2 1 .5 3.500-2-2.500z" fill="#2a3c58"/><path d="M7 5l2.500 6L13 4" fill="none" stroke="#2e3f5c" stroke-width="1"/><ellipse cx="8" cy="8" rx="3.200" ry="7" fill="none" stroke="#a9c4e3" stroke-width=".6"/></svg>
<div class="row" style="left:46px;top:583px;font-size:15px;letter-spacing:-0.040px;">ArcGIS-Feature-Dienst</div>
<svg class="ic16" style="left:24px;top:607px" viewBox="0 0 16 16"><g stroke="#5d8cc6" stroke-width="2.300" stroke-linecap="round"><path d="M8 1.500v13M2.400 4.700l11.200 6.600M13.600 4.700L2.400 11.300"/></g><circle cx="8" cy="8" r="1.800" fill="#fff"/></svg>
<div class="row" style="left:46px;top:604px;font-size:15px;letter-spacing:-0.259px;">GeoNode</div>
<div class="a" style="left:131px;top:672px;width:16px;height:1px;background-image:linear-gradient(90deg,#a8a8a8 1px,transparent 1px);background-size:3px 1px"></div>
<div class="a ptitle" style="left:4px;top:678px;font-size:15px;letter-spacing:-0.424px;">Layer</div>
<svg class="ic16" style="left:8px;top:704px" viewBox="0 0 16 16"><path d="M1 10l5-3 5 5-6 3z" fill="#e84a3b"/><path d="M1 10l3-2 3 2-3 2z" fill="#f6d33b"/><path d="M3 7l3-1.500 2 2-3 2z" fill="#5d8cc6"/><path d="M14.500 1L8 7.500l1.500 1.500L15.500 2z" fill="#d28a2c" stroke="#a4671a" stroke-width=".5"/><path d="M6.500 8.500l2 2-2.500 1.500z" fill="#c9a26a"/></svg>
<svg class="ic16" style="left:33px;top:704px" viewBox="0 0 16 16"><path d="M1.500 6.500h7v7h-7z" fill="#f5f5f5" stroke="#8b8b8b"/><path d="M4 1.500h6.500v9H4z" fill="#dfe8f3" stroke="#5a7fae"/><path d="M6 1v9M8.500 1v9" stroke="#5a7fae" stroke-width=".8"/><rect x="9.500" y="9.500" width="6" height="6" rx="1.300" fill="#6fae58" stroke="#3c7a2a" stroke-width=".6"/><path d="M12.500 10.800v3.400M10.800 12.500h3.400" stroke="#fff" stroke-width="1.200"/></svg>
<svg class="ic16" style="left:58px;top:704px" viewBox="0 0 16 16"><path d="M.8 8C3 4.500 5.500 3.200 8 3.200S13 4.500 15.200 8C13 11 10.500 12.200 8 12.200S3 11 .8 8z" fill="#f6f6f6" stroke="#9a9a9a" stroke-width=".9"/><circle cx="8" cy="7.600" r="3" fill="#5d8cc6"/><circle cx="8" cy="7.600" r="1.300" fill="#1e3556"/><path d="M12 13h4l-2 2.500z" fill="#555"/></svg>
<svg class="ic16" style="left:83px;top:704px" viewBox="0 0 16 16"><path d="M1 2.500h14L9.700 8.800V15L6.300 13V8.800z" fill="#6b9bd2" stroke="#3568a5" stroke-width=".7"/><rect x="1" y="1" width="14" height="2" fill="#f2d548" stroke="#c9a70c" stroke-width=".5"/></svg>
<svg class="ic16" style="left:108px;top:704px" viewBox="0 0 16 16"><text x="0" y="10" font-family="Liberation Serif" font-size="14" fill="#6d3b86">ε</text><path d="M7.500 8.500h8l-3 3.500v3.500l-2-1v-2.500z" fill="#bdbdbd" stroke="#8a8a8a" stroke-width=".5"/></svg>
<div class="dd" style="left:130px;top:711px"></div>
<svg class="ic16" style="left:146px;top:704px" viewBox="0 0 16 16"><path d="M2.500 2v11.500h4" fill="none" stroke="#9a9a9a" stroke-width="1"/><rect x="4" y="4" width="3" height="3" fill="#f39a1d"/><rect x="4" y="10.500" width="3" height="3" fill="#f39a1d"/><path d="M11.200 15L6.700 9.500H9.400V1.500H13V9.500H15.700z" fill="#4f82bd" stroke="#2d5a94" stroke-width=".6"/></svg>
<svg class="ic16" style="left:170px;top:704px" viewBox="0 0 16 16"><path d="M2.500 3v11h4" fill="none" stroke="#9a9a9a" stroke-width="1"/><rect x="4" y="5" width="3" height="3" fill="#f39a1d"/><rect x="4" y="11" width="3" height="3" fill="#f39a1d"/><path d="M11 1L15.500 6.500H12.800V14.500H9.200V6.500H6.500z" fill="#4f82bd" stroke="#2d5a94" stroke-width=".6"/></svg>
<svg class="ic16" style="left:194px;top:704px" viewBox="0 0 16 16"><rect x="1.500" y="1.500" width="11" height="11" fill="#fff" stroke="#6a6a6a" stroke-width="1.100"/><rect x="9.500" y="10.500" width="6" height="4" rx="1.200" fill="#e8324a"/><path d="M10.800 12.500h3.400" stroke="#fff" stroke-width="1.100"/></svg>
<div class="a tree" style="left:0;top:728px;width:273px;height:439px;overflow:hidden"></div>
<div class="a" style="left:1px;top:729px;width:271px;height:21px;background:#308cc6"></div>
<div class="a" style="left:247px;top:735px;width:17px;height:12px;background:#f2f2f2;border-radius:3px"></div>
<svg class="a" style="left:24px;top:732px" width="14" height="14" viewBox="0 0 14 14"><rect x=".5" y=".5" width="13" height="13" fill="#fff" stroke="#b5b5b5"/><path d="M3.200 7.200L5.600 10.400 10.600 3.200" fill="none" stroke="#111" stroke-width="1.700"/></svg>
<div class="a" style="left:48px;top:735px;width:8px;height:8px;border-radius:50%;background:#8fa3a3;border:1px solid #6b8a98"></div>
<div class="row" style="left:66px;top:729px;color:#fff;font-weight:bold;text-decoration:underline;text-underline-offset:2px;font-size:15px;letter-spacing:-0.185px;">Reprojiziert</div>
<svg class="a" style="left:24px;top:753px" width="14" height="14" viewBox="0 0 14 14"><rect x=".5" y=".5" width="13" height="13" fill="#fff" stroke="#b5b5b5"/><path d="M3.200 7.200L5.600 10.400 10.600 3.200" fill="none" stroke="#111" stroke-width="1.700"/></svg>
<div class="a" style="left:48px;top:756px;width:8px;height:8px;border-radius:50%;background:#e3a82e;border:1px solid #b9892a"></div>
<div class="row" style="left:66px;top:750px;color:#000;font-weight:bold;font-size:15px;letter-spacing:-0.476px;">14c_data</div>
<svg class="a" style="left:24px;top:774px" width="14" height="14" viewBox="0 0 14 14"><rect x=".5" y=".5" width="13" height="13" fill="#fff" stroke="#b5b5b5"/><path d="M3.200 7.200L5.600 10.400 10.600 3.200" fill="none" stroke="#111" stroke-width="1.700"/></svg>
<div class="a" style="left:44px;top:774px;width:16px;height:15px;background:#c43c39;border:1px solid #8e2b29"></div>
<div class="row" style="left:66px;top:771px;color:#000;font-weight:bold;font-size:15px;letter-spacing:-0.228px;">kantonsgrenzen K4kant19970</div>
<div class="a" style="left:272px;top:729px;width:1px;height:437px;background:#b9b9b9"></div>
<div class="a" style="left:273px;top:729px;width:6px;height:440px;background:#efefef"></div>
<div class="a" style="left:1px;top:1152px;width:271px;height:14px;background:#e1e1e1;border-top:1px solid #c4c4c4"></div>
<div class="a" style="left:1px;top:1152px;width:14px;height:14px;background:#f4f4f4;border:1px solid #c0c0c0"></div><div class="a" style="left:4px;top:1155px;width:0;height:0;border-top:4px solid transparent;border-bottom:4px solid transparent;border-right:5px solid #4d4d4d"></div>
<div class="a" style="left:258px;top:1152px;width:14px;height:14px;background:#f4f4f4;border:1px solid #c0c0c0"></div><div class="a" style="left:263px;top:1155px;width:0;height:0;border-top:4px solid transparent;border-bottom:4px solid transparent;border-left:5px solid #4d4d4d"></div>
<div class="a" style="left:15px;top:1152px;width:165px;height:14px;background:#f4f4f4;border:1px solid #c0c0c0"></div>
<div class="a" style="left:179px;top:1152px;width:80px;height:14px;background:#dadada;border:1px solid #b5b5b5"></div>
<div class="a ptitle" style="left:1478px;top:175px;font-size:15px;letter-spacing:0.009px;">Verarbeitungswerkzeuge</div>
<svg class="a" style="left:1893px;top:178px" width="11" height="11" viewBox="0 0 11 11"><rect x=".5" y=".5" width="10" height="10" rx="2" fill="#efefef" stroke="#5a5a5a"/><rect x="4.5" y="2.5" width="4" height="4" fill="none" stroke="#5a5a5a" stroke-width=".9"/><rect x="2.5" y="4.5" width="4" height="4" fill="#efefef" stroke="#5a5a5a" stroke-width=".9"/></svg><svg class="a" style="left:1907px;top:178px" width="11" height="11" viewBox="0 0 11 11"><rect x=".5" y=".5" width="10" height="10" rx="2" fill="#efefef" stroke="#5a5a5a"/><path d="M2.8 2.8L8.2 8.2M8.2 2.8L2.8 8.2" stroke="#3a3a3a" stroke-width="1.7"/></svg>
<svg class="ic16" style="left:1483px;top:201px" viewBox="0 0 16 16"><g fill="#d32a2a"><circle cx="5" cy="5" r="2.600"/><path d="M5 .5v9M.5 5h9M1.800 1.800l6.400 6.400M8.200 1.800L1.800 8.200" stroke="#d32a2a" stroke-width="1.500"/></g><circle cx="5" cy="5" r="1" fill="#f7f7f7"/><g><circle cx="10.500" cy="9.500" r="2.100" fill="#8b8b8b"/><path d="M10.500 6v7M7 9.500h7M8 7l5 5M13 7l-5 5" stroke="#8b8b8b" stroke-width="1.200"/><circle cx="10.500" cy="9.500" r=".8" fill="#f7f7f7"/></g><g><circle cx="5.500" cy="12.500" r="1.700" fill="#8aa6e0"/><path d="M5.500 9.800v5.400M2.800 12.500h5.400M3.600 10.600l3.800 3.800M7.400 10.600l-3.800 3.800" stroke="#8aa6e0" stroke-width="1"/></g><path d="M11 14h4l-2 2z" fill="#555"/></svg>
<svg class="ic16" style="left:1508px;top:201px" viewBox="0 0 16 16"><ellipse cx="7.500" cy="7" rx="7" ry="5" fill="none" stroke="#7d7d7d" stroke-width="2.200"/><text x="5" y="13.500" font-family="Liberation Sans" font-weight="bold" font-size="11.500" fill="#2b63b8">R</text><path d="M11.500 13.500h4l-2 2z" fill="#555"/></svg>
<svg class="ic16" style="left:1532px;top:201px" viewBox="0 0 16 16"><path d="M7.800 1C5 1 5.200 2.200 5.200 2.200v1.600h2.700v.6H3.200S1 4.200 1 7.400s1.900 3.100 1.900 3.100h1.300V8.700s-.1-1.900 1.900-1.900h3s1.800 0 1.800-1.800V2.700S11.200 1 7.800 1z" fill="#3c78b2"/><path d="M8.200 15c2.800 0 2.600-1.200 2.600-1.200v-1.600H8.100v-.6h4.700s2.200.2 2.200-3-1.900-3.100-1.900-3.100h-1.300v1.800s.1 1.900-1.900 1.900h-3s-1.800 0-1.800 1.800v2.300S4.800 15 8.200 15z" fill="#f7cf46"/><path d="M11.500 14.500h4l-2 2z" fill="#555"/></svg>
<svg class="a" style="left:1557px;top:201px" width="16" height="16" viewBox="0 0 16 16"><circle cx="8" cy="8" r="6.9" fill="#fafafa" stroke="#8a8a8a" stroke-width="1.1"/><path d="M8 3.5V8.2L11 10" fill="none" stroke="#8a8a8a" stroke-width="1.1"/></svg>
<div class="pressed" style="left:1579px;top:198px;width:23px;height:23px"></div>
<svg class="ic16" style="left:1582px;top:201px" viewBox="0 0 16 16"><path d="M3 1.500h7l3 3V14.500H3z" fill="#fdfdfd" stroke="#9a9a9a" stroke-width=".9"/><path d="M10 1.500v3h3" fill="none" stroke="#9a9a9a" stroke-width=".8"/><path d="M5 6.500h6M5 9h6M5 11.500h6" stroke="#b4b4b4" stroke-width="1"/></svg>
<div class="tsep" style="left:1607px;top:201px;height:16px"></div>
<svg class="ic16" style="left:1614px;top:201px" viewBox="0 0 16 16"><rect x="1.500" y="2" width="8.500" height="8.500" rx=".8" fill="#f4e23a" stroke="#d9c51e" stroke-width=".8"/><path d="M13.800 2.500l1.700.9-4.700 9.100-1.900 1.600.2-2.500z" fill="#f1d95a" stroke="#9a8a3a" stroke-width=".6"/></svg>
<div class="tsep" style="left:1638px;top:201px;height:16px"></div>
<svg class="ic16" style="left:1646px;top:201px" viewBox="0 0 16 16"><path d="M2 3.500a3 3 0 0 1 4-2.300L4.300 3l.8 1.800 1.900.2L8.600 3.400A3 3 0 0 1 6 7L14.500 13.500a1.200 1.200 0 0 1-1.700 1.700L5.500 7.400A3 3 0 0 1 2 3.500z" fill="#e9e9e9" stroke="#8a8a8a" stroke-width=".6"/><path d="M7.600 7.200l7.200 6.200a1.500 1.500 0 0 1-2.200 2.200L6.200 8.600z" fill="#ecd060" stroke="#8a7420" stroke-width=".7"/></svg>
<div class="a inp" style="left:1474px;top:225px;width:446px;height:27px"></div>
<svg class="a" style="left:1482px;top:231px" width="14" height="14" viewBox="0 0 14 14"><circle cx="5.600" cy="5.600" r="4" fill="none" stroke="#8c8c8c" stroke-width="1.300"/><path d="M8.600 8.600L12.500 12.500" stroke="#8c8c8c" stroke-width="1.500"/></svg>
<div class="a" style="left:1503px;top:230px;color:#9b9b9b;line-height:18px;font-size:15px;letter-spacing:-0.589px;">Suche…</div>
<div class="a tree" style="left:1474px;top:252px;width:446px;height:415px;overflow:hidden"></div>
<div class="a" style="left:0;top:0;width:1905px;height:666px;overflow:hidden"><div class="arr" style="left:1483px;top:259px"></div><svg class="a" style="left:1498px;top:256px" width="16" height="16" viewBox="0 0 16 16"><circle cx="8" cy="8" r="6.9" fill="#fafafa" stroke="#8a8a8a" stroke-width="1.1"/><path d="M8 3.5V8.2L11 10" fill="none" stroke="#8a8a8a" stroke-width="1.1"/></svg><div class="row" style="left:1520px;top:253px;font-size:15px;letter-spacing:0.015px;">Kürzlich verwendet</div><div class="arr" style="left:1483px;top:280px"></div><svg class="ic16" style="left:1498px;top:277px" viewBox="0 0 16 16"><circle cx="7.6" cy="7.8" r="5.4" fill="none" stroke="#6aa83a" stroke-width="2.5"/><path d="M2.2 7.8A5.4 5.4 0 0 1 7.6 2.4" fill="none" stroke="#83bd4f" stroke-width="2.5"/><path d="M7.6 7.2L12.2 7.6 15.4 14 13.3 15.2 11 11.4 9.6 12.6Z" fill="#5a962e"/><path d="M7.8 7.2L10.9 7.5 9.8 8.5 10.6 10.4 9.3 9.5 8.5 10.5Z" fill="#f0821e"/><path d="M7.8 7.2L9.3 7.4 9.0 8.5Z" fill="#f7d154"/></svg><div class="row" style="left:1520px;top:274px;font-size:15px;letter-spacing:-0.018px;">Dateiwerkzeuge</div><div class="arr" style="left:1483px;top:301px"></div><svg class="ic16" style="left:1498px;top:298px" viewBox="0 0 16 16"><circle cx="7.6" cy="7.8" r="5.4" fill="none" stroke="#6aa83a" stroke-width="2.5"/><path d="M2.2 7.8A5.4 5.4 0 0 1 7.6 2.4" fill="none" stroke="#83bd4f" stroke-width="2.5"/><path d="M7.6 7.2L12.2 7.6 15.4 14 13.3 15.2 11 11.4 9.6 12.6Z" fill="#5a962e"/><path d="M7.8 7.2L10.9 7.5 9.8 8.5 10.6 10.4 9.3 9.5 8.5 10.5Z" fill="#f0821e"/><path d="M7.8 7.2L9.3 7.4 9.0 8.5Z" fill="#f7d154"/></svg><div class="row" style="left:1520px;top:295px;font-size:15px;letter-spacing:-0.084px;">Datenbank</div><div class="arr" style="left:1483px;top:322px"></div><svg class="ic16" style="left:1498px;top:319px" viewBox="0 0 16 16"><circle cx="7.6" cy="7.8" r="5.4" fill="none" stroke="#6aa83a" stroke-width="2.5"/><path d="M2.2 7.8A5.4 5.4 0 0 1 7.6 2.4" fill="none" stroke="#83bd4f" stroke-width="2.5"/><path d="M7.6 7.2L12.2 7.6 15.4 14 13.3 15.2 11 11.4 9.6 12.6Z" fill="#5a962e"/><path d="M7.8 7.2L10.9 7.5 9.8 8.5 10.6 10.4 9.3 9.5 8.5 10.5Z" fill="#f0821e"/><path d="M7.8 7.2L9.3 7.4 9.0 8.5Z" fill="#f7d154"/></svg><div class="row" style="left:1520px;top:316px;font-size:15px;letter-spacing:0.234px;">Interpolation</div><div class="arr" style="left:1483px;top:343px"></div><svg class="ic16" style="left:1498px;top:340px" viewBox="0 0 16 16"><circle cx="7.6" cy="7.8" r="5.4" fill="none" stroke="#6aa83a" stroke-width="2.5"/><path d="M2.2 7.8A5.4 5.4 0 0 1 7.6 2.4" fill="none" stroke="#83bd4f" stroke-width="2.5"/><path d="M7.6 7.2L12.2 7.6 15.4 14 13.3 15.2 11 11.4 9.6 12.6Z" fill="#5a962e"/><path d="M7.8 7.2L10.9 7.5 9.8 8.5 10.6 10.4 9.3 9.5 8.5 10.5Z" fill="#f0821e"/><path d="M7.8 7.2L9.3 7.4 9.0 8.5Z" fill="#f7d154"/></svg><div class="row" style="left:1520px;top:337px;font-size:15px;letter-spacing:0.026px;">Kartographie</div><div class="arr" style="left:1483px;top:364px"></div><svg class="ic16" style="left:1498px;top:361px" viewBox="0 0 16 16"><circle cx="7.6" cy="7.8" r="5.4" fill="none" stroke="#6aa83a" stroke-width="2.5"/><path d="M2.2 7.8A5.4 5.4 0 0 1 7.6 2.4" fill="none" stroke="#83bd4f" stroke-width="2.5"/><path d="M7.6 7.2L12.2 7.6 15.4 14 13.3 15.2 11 11.4 9.6 12.6Z" fill="#5a962e"/><path d="M7.8 7.2L10.9 7.5 9.8 8.5 10.6 10.4 9.3 9.5 8.5 10.5Z" fill="#f0821e"/><path d="M7.8 7.2L9.3 7.4 9.0 8.5Z" fill="#f7d154"/></svg><div class="row" style="left:1520px;top:358px;font-size:15px;letter-spacing:-0.147px;">Layerwerkzeuge</div><div class="arr" style="left:1483px;top:385px"></div><svg class="ic16" style="left:1498px;top:382px" viewBox="0 0 16 16"><circle cx="7.6" cy="7.8" r="5.4" fill="none" stroke="#6aa83a" stroke-width="2.5"/><path d="M2.2 7.8A5.4 5.4 0 0 1 7.6 2.4" fill="none" stroke="#83bd4f" stroke-width="2.5"/><path d="M7.6 7.2L12.2 7.6 15.4 14 13.3 15.2 11 11.4 9.6 12.6Z" fill="#5a962e"/><path d="M7.8 7.2L10.9 7.5 9.8 8.5 10.6 10.4 9.3 9.5 8.5 10.5Z" fill="#f0821e"/><path d="M7.8 7.2L9.3 7.4 9.0 8.5Z" fill="#f7d154"/></svg><div class="row" style="left:1520px;top:379px;font-size:15px;letter-spacing:-0.028px;">Netzwerkanalyse</div><div class="arr" style="left:1483px;top:406px"></div><svg class="ic16" style="left:1498px;top:403px" viewBox="0 0 16 16"><circle cx="7.6" cy="7.8" r="5.4" fill="none" stroke="#6aa83a" stroke-width="2.5"/><path d="M2.2 7.8A5.4 5.4 0 0 1 7.6 2.4" fill="none" stroke="#83bd4f" stroke-width="2.5"/><path d="M7.6 7.2L12.2 7.6 15.4 14 13.3 15.2 11 11.4 9.6 12.6Z" fill="#5a962e"/><path d="M7.8 7.2L10.9 7.5 9.8 8.5 10.6 10.4 9.3 9.5 8.5 10.5Z" fill="#f0821e"/><path d="M7.8 7.2L9.3 7.4 9.0 8.5Z" fill="#f7d154"/></svg><div class="row" style="left:1520px;top:400px;font-size:15px;letter-spacing:0.181px;">Plotts</div><div class="arr" style="left:1483px;top:427px"></div><svg class="ic16" style="left:1498px;top:424px" viewBox="0 0 16 16"><circle cx="7.6" cy="7.8" r="5.4" fill="none" stroke="#6aa83a" stroke-width="2.5"/><path d="M2.2 7.8A5.4 5.4 0 0 1 7.6 2.4" fill="none" stroke="#83bd4f" stroke-width="2.5"/><path d="M7.6 7.2L12.2 7.6 15.4 14 13.3 15.2 11 11.4 9.6 12.6Z" fill="#5a962e"/><path d="M7.8 7.2L10.9 7.5 9.8 8.5 10.6 10.4 9.3 9.5 8.5 10.5Z" fill="#f0821e"/><path d="M7.8 7.2L9.3 7.4 9.0 8.5Z" fill="#f7d154"/></svg><div class="row" style="left:1520px;top:421px;font-size:15px;letter-spacing:-0.283px;">Rasteranalyse</div><div class="arr" style="left:1483px;top:448px"></div><svg class="ic16" style="left:1498px;top:445px" viewBox="0 0 16 16"><circle cx="7.6" cy="7.8" r="5.4" fill="none" stroke="#6aa83a" stroke-width="2.5"/><path d="M2.2 7.8A5.4 5.4 0 0 1 7.6 2.4" fill="none" stroke="#83bd4f" stroke-width="2.5"/><path d="M7.6 7.2L12.2 7.6 15.4 14 13.3 15.2 11 11.4 9.6 12.6Z" fill="#5a962e"/><path d="M7.8 7.2L10.9 7.5 9.8 8.5 10.6 10.4 9.3 9.5 8.5 10.5Z" fill="#f0821e"/><path d="M7.8 7.2L9.3 7.4 9.0 8.5Z" fill="#f7d154"/></svg><div class="row" style="left:1520px;top:442px;font-size:15px;letter-spacing:-0.165px;">Rastererzeugung</div><div class="arr" style="left:1483px;top:469px"></div><svg class="ic16" style="left:1498px;top:466px" viewBox="0 0 16 16"><circle cx="7.6" cy="7.8" r="5.4" fill="none" stroke="#6aa83a" stroke-width="2.5"/><path d="M2.2 7.8A5.4 5.4 0 0 1 7.6 2.4" fill="none" stroke="#83bd4f" stroke-width="2.5"/><path d="M7.6 7.2L12.2 7.6 15.4 14 13.3 15.2 11 11.4 9.6 12.6Z" fill="#5a962e"/><path d="M7.8 7.2L10.9 7.5 9.8 8.5 10.6 10.4 9.3 9.5 8.5 10.5Z" fill="#f0821e"/><path d="M7.8 7.2L9.3 7.4 9.0 8.5Z" fill="#f7d154"/></svg><div class="row" style="left:1520px;top:463px;font-size:15px;letter-spacing:-0.183px;">Rastergeländeanalyse</div><div class="arr" style="left:1483px;top:490px"></div><svg class="ic16" style="left:1498px;top:487px" viewBox="0 0 16 16"><circle cx="7.6" cy="7.8" r="5.4" fill="none" stroke="#6aa83a" stroke-width="2.5"/><path d="M2.2 7.8A5.4 5.4 0 0 1 7.6 2.4" fill="none" stroke="#83bd4f" stroke-width="2.5"/><path d="M7.6 7.2L12.2 7.6 15.4 14 13.3 15.2 11 11.4 9.6 12.6Z" fill="#5a962e"/><path d="M7.8 7.2L10.9 7.5 9.8 8.5 10.6 10.4 9.3 9.5 8.5 10.5Z" fill="#f0821e"/><path d="M7.8 7.2L9.3 7.4 9.0 8.5Z" fill="#f7d154"/></svg><div class="row" style="left:1520px;top:484px;font-size:15px;letter-spacing:-0.148px;">Rasterwerkzeuge</div><div class="arr" style="left:1483px;top:511px"></div><svg class="ic16" style="left:1498px;top:508px" viewBox="0 0 16 16"><circle cx="7.6" cy="7.8" r="5.4" fill="none" stroke="#6aa83a" stroke-width="2.5"/><path d="M2.2 7.8A5.4 5.4 0 0 1 7.6 2.4" fill="none" stroke="#83bd4f" stroke-width="2.5"/><path d="M7.6 7.2L12.2 7.6 15.4 14 13.3 15.2 11 11.4 9.6 12.6Z" fill="#5a962e"/><path d="M7.8 7.2L10.9 7.5 9.8 8.5 10.6 10.4 9.3 9.5 8.5 10.5Z" fill="#f0821e"/><path d="M7.8 7.2L9.3 7.4 9.0 8.5Z" fill="#f7d154"/></svg><div class="row" style="left:1520px;top:505px;font-size:15px;letter-spacing:-0.064px;">Vektoranalyse</div><div class="arr" style="left:1483px;top:532px"></div><svg class="ic16" style="left:1498px;top:529px" viewBox="0 0 16 16"><circle cx="7.6" cy="7.8" r="5.4" fill="none" stroke="#6aa83a" stroke-width="2.5"/><path d="M2.2 7.8A5.4 5.4 0 0 1 7.6 2.4" fill="none" stroke="#83bd4f" stroke-width="2.5"/><path d="M7.6 7.2L12.2 7.6 15.4 14 13.3 15.2 11 11.4 9.6 12.6Z" fill="#5a962e"/><path d="M7.8 7.2L10.9 7.5 9.8 8.5 10.6 10.4 9.3 9.5 8.5 10.5Z" fill="#f0821e"/><path d="M7.8 7.2L9.3 7.4 9.0 8.5Z" fill="#f7d154"/></svg><div class="row" style="left:1520px;top:526px;font-size:15px;letter-spacing:0.103px;">Vektorauswahl</div><div class="arr" style="left:1483px;top:553px"></div><svg class="ic16" style="left:1498px;top:550px" viewBox="0 0 16 16"><circle cx="7.6" cy="7.8" r="5.4" fill="none" stroke="#6aa83a" stroke-width="2.5"/><path d="M2.2 7.8A5.4 5.4 0 0 1 7.6 2.4" fill="none" stroke="#83bd4f" stroke-width="2.5"/><path d="M7.6 7.2L12.2 7.6 15.4 14 13.3 15.2 11 11.4 9.6 12.6Z" fill="#5a962e"/><path d="M7.8 7.2L10.9 7.5 9.8 8.5 10.6 10.4 9.3 9.5 8.5 10.5Z" fill="#f0821e"/><path d="M7.8 7.2L9.3 7.4 9.0 8.5Z" fill="#f7d154"/></svg><div class="row" style="left:1520px;top:547px;font-size:15px;letter-spacing:0.073px;">Vektoren allgemein</div><div class="arr" style="left:1483px;top:574px"></div><svg class="ic16" style="left:1498px;top:571px" viewBox="0 0 16 16"><circle cx="7.6" cy="7.8" r="5.4" fill="none" stroke="#6aa83a" stroke-width="2.5"/><path d="M2.2 7.8A5.4 5.4 0 0 1 7.6 2.4" fill="none" stroke="#83bd4f" stroke-width="2.5"/><path d="M7.6 7.2L12.2 7.6 15.4 14 13.3 15.2 11 11.4 9.6 12.6Z" fill="#5a962e"/><path d="M7.8 7.2L10.9 7.5 9.8 8.5 10.6 10.4 9.3 9.5 8.5 10.5Z" fill="#f0821e"/><path d="M7.8 7.2L9.3 7.4 9.0 8.5Z" fill="#f7d154"/></svg><div class="row" style="left:1520px;top:568px;font-size:15px;letter-spacing:0.039px;">Vektorerzeugung</div><div class="arr" style="left:1483px;top:595px"></div><svg class="ic16" style="left:1498px;top:592px" viewBox="0 0 16 16"><circle cx="7.6" cy="7.8" r="5.4" fill="none" stroke="#6aa83a" stroke-width="2.5"/><path d="M2.2 7.8A5.4 5.4 0 0 1 7.6 2.4" fill="none" stroke="#83bd4f" stroke-width="2.5"/><path d="M7.6 7.2L12.2 7.6 15.4 14 13.3 15.2 11 11.4 9.6 12.6Z" fill="#5a962e"/><path d="M7.8 7.2L10.9 7.5 9.8 8.5 10.6 10.4 9.3 9.5 8.5 10.5Z" fill="#f0821e"/><path d="M7.8 7.2L9.3 7.4 9.0 8.5Z" fill="#f7d154"/></svg><div class="row" style="left:1520px;top:589px;font-size:15px;letter-spacing:0.192px;">Vektorgeometrie</div><div class="arr" style="left:1483px;top:616px"></div><svg class="ic16" style="left:1498px;top:613px" viewBox="0 0 16 16"><circle cx="7.6" cy="7.8" r="5.4" fill="none" stroke="#6aa83a" stroke-width="2.5"/><path d="M2.2 7.8A5.4 5.4 0 0 1 7.6 2.4" fill="none" stroke="#83bd4f" stroke-width="2.5"/><path d="M7.6 7.2L12.2 7.6 15.4 14 13.3 15.2 11 11.4 9.6 12.6Z" fill="#5a962e"/><path d="M7.8 7.2L10.9 7.5 9.8 8.5 10.6 10.4 9.3 9.5 8.5 10.5Z" fill="#f0821e"/><path d="M7.8 7.2L9.3 7.4 9.0 8.5Z" fill="#f7d154"/></svg><div class="row" style="left:1520px;top:610px;font-size:15px;letter-spacing:0.029px;">Vektorkacheln</div><div class="arr" style="left:1483px;top:637px"></div><svg class="ic16" style="left:1498px;top:634px" viewBox="0 0 16 16"><circle cx="7.6" cy="7.8" r="5.4" fill="none" stroke="#6aa83a" stroke-width="2.5"/><path d="M2.2 7.8A5.4 5.4 0 0 1 7.6 2.4" fill="none" stroke="#83bd4f" stroke-width="2.5"/><path d="M7.6 7.2L12.2 7.6 15.4 14 13.3 15.2 11 11.4 9.6 12.6Z" fill="#5a962e"/><path d="M7.8 7.2L10.9 7.5 9.8 8.5 10.6 10.4 9.3 9.5 8.5 10.5Z" fill="#f0821e"/><path d="M7.8 7.2L9.3 7.4 9.0 8.5Z" fill="#f7d154"/></svg><div class="row" style="left:1520px;top:631px;font-size:15px;letter-spacing:0.094px;">Vektorlayerüberlagerung</div><div class="arr" style="left:1483px;top:658px"></div><svg class="ic16" style="left:1498px;top:655px" viewBox="0 0 16 16"><circle cx="7.6" cy="7.8" r="5.4" fill="none" stroke="#6aa83a" stroke-width="2.5"/><path d="M2.2 7.8A5.4 5.4 0 0 1 7.6 2.4" fill="none" stroke="#83bd4f" stroke-width="2.5"/><path d="M7.6 7.2L12.2 7.6 15.4 14 13.3 15.2 11 11.4 9.6 12.6Z" fill="#5a962e"/><path d="M7.8 7.2L10.9 7.5 9.8 8.5 10.6 10.4 9.3 9.5 8.5 10.5Z" fill="#f0821e"/><path d="M7.8 7.2L9.3 7.4 9.0 8.5Z" fill="#f7d154"/></svg><div class="row" style="left:1520px;top:652px;font-size:15px;letter-spacing:0.198px;">Vektortabelle</div></div>
<div class="a" style="left:1905px;top:253px;width:14px;height:413px;background:#f1f1f1;border-left:1px solid #c4c4c4"></div>
<div class="a" style="left:1905px;top:253px;width:14px;height:14px;border:1px solid #c0c0c0;background:#f6f6f6"></div><div class="a" style="left:1909px;top:257px;width:0;height:0;border-left:4px solid transparent;border-right:4px solid transparent;border-bottom:5px solid #4d4d4d"></div>
<div class="a" style="left:1905px;top:652px;width:14px;height:14px;border:1px solid #c0c0c0;background:#f6f6f6"></div><div class="a" style="left:1909px;top:657px;width:0;height:0;border-left:4px solid transparent;border-right:4px solid transparent;border-top:5px solid #4d4d4d"></div>
<div class="a" style="left:1905px;top:585px;width:14px;height:68px;background:#dcdcdc;border:1px solid #b9b9b9"></div>
<div class="a" style="left:1689px;top:669px;width:16px;height:1px;background-image:linear-gradient(90deg,#a8a8a8 1px,transparent 1px);background-size:3px 1px"></div>
<div class="a ptitle" style="left:1478px;top:675px;font-size:15px;letter-spacing:-0.196px;">Ergebnisanzeige</div>
<svg class="a" style="left:1893px;top:678px" width="11" height="11" viewBox="0 0 11 11"><rect x=".5" y=".5" width="10" height="10" rx="2" fill="#efefef" stroke="#5a5a5a"/><rect x="4.5" y="2.5" width="4" height="4" fill="none" stroke="#5a5a5a" stroke-width=".9"/><rect x="2.5" y="4.5" width="4" height="4" fill="#efefef" stroke="#5a5a5a" stroke-width=".9"/></svg><svg class="a" style="left:1907px;top:678px" width="11" height="11" viewBox="0 0 11 11"><rect x=".5" y=".5" width="10" height="10" rx="2" fill="#efefef" stroke="#5a5a5a"/><path d="M2.8 2.8L8.2 8.2M8.2 2.8L2.8 8.2" stroke="#3a3a3a" stroke-width="1.7"/></svg>
<div class="a tree" style="left:1474px;top:694px;width:446px;height:235px"></div>
<div class="a" style="left:1689px;top:931px;width:16px;height:1px;background-image:linear-gradient(90deg,#a8a8a8 1px,transparent 1px);background-size:3px 1px"></div>
<div class="a tree" style="left:1474px;top:933px;width:446px;height:234px"></div>
<div class="a" style="left:1471px;top:663px;width:1px;height:16px;background-image:linear-gradient(#a8a8a8 1px,transparent 1px);background-size:1px 3px"></div>
<div class="a" style="left:279px;top:173px;width:1189px;height:994px;background:#fff;border:1px solid #b8b8b8;border-radius:1px;overflow:hidden"><svg class="a" style="left:0;top:0" width="1187" height="992" viewBox="0 0 1187 992"><g fill="#c43c39" stroke="#232323" stroke-width="1" stroke-linejoin="round"><polygon points="415.0,237.2 421.2,231.0 428.8,227.2 437.5,224.0 443.8,222.2 450.0,219.2 453.8,219.8 459.5,215.2 461.5,217.5 456.2,223.0 460.5,227.2 454.5,229.8 455.5,234.8 459.2,239.0 466.2,236.5 475.0,234.0 483.8,231.0 488.8,227.2 491.2,221.0 495.0,219.2 502.5,219.8 510.0,219.2 513.8,222.2 515.5,228.5 517.0,233.5 522.5,234.0 525.0,231.0 532.5,230.0 540.0,229.5 550.0,231.0 556.2,229.0 561.2,226.0 563.8,221.0 570.0,217.2 575.0,216.0 580.0,213.5 583.8,209.8 586.2,208.0 591.2,210.5 595.0,209.8 600.0,209.2 606.2,211.0 610.0,213.5 613.8,218.5 617.5,222.2 620.0,224.8 625.0,225.4 631.2,224.8 634.4,222.2 637.5,223.5 640.6,225.4 645.0,225.4 650.0,224.1 654.4,222.2 656.9,220.4 656.2,219.1 652.5,219.5 650.0,217.9 649.0,213.5 652.8,210.0 657.5,207.2 662.5,204.1 666.9,202.5 670.0,203.2 673.1,206.0 676.2,208.5 678.5,211.0 676.2,212.9 680.0,212.2 682.5,211.0 685.0,206.0 682.5,204.1 685.0,201.0 686.2,197.2 688.8,194.1 687.5,191.0 683.8,187.9 678.8,189.8 675.0,189.1 670.0,191.6 666.9,192.9 665.6,196.0 661.2,197.9 656.2,197.2 651.2,199.1 648.8,195.4 643.8,192.2 640.0,188.5 636.2,186.0 637.5,182.2 635.0,177.9 638.8,174.1 645.0,169.1 646.9,163.5 650.6,157.9 656.2,152.2 662.5,149.8 670.0,147.2 675.0,146.6 675.6,144.8 672.5,142.2 673.8,138.5 677.5,139.8 683.8,139.1 686.9,142.2 688.1,148.5 688.1,152.9 691.2,154.1 693.8,151.0 693.8,143.5 696.2,141.0 700.0,144.8 703.1,146.6 703.8,152.9 706.2,155.4 712.5,153.5 715.6,156.6 717.2,158.5 715.0,161.0 711.2,161.6 712.5,166.0 715.6,169.1 714.4,178.5 718.8,180.4 723.8,182.2 728.8,184.1 730.0,179.8 731.9,175.4 728.8,173.5 724.4,172.9 723.8,169.8 727.5,166.6 730.6,166.0 733.1,162.9 734.4,166.0 737.5,169.1 741.2,171.0 743.8,174.1 748.8,174.8 749.4,177.9 745.0,178.5 745.0,182.9 748.8,187.2 750.0,191.0 755.0,193.5 760.0,194.5 765.0,192.2 770.0,190.4 773.8,188.5 780.0,185.4 785.0,184.5 792.5,184.5 798.8,184.1 803.8,186.6 810.0,187.2 815.0,187.0 820.0,186.0 825.0,193.5 837.5,199.8 850.0,207.2 862.5,213.5 873.8,219.8 874.5,226.0 880.0,232.2 886.2,239.8 893.8,246.0 900.0,251.0 907.5,251.5 913.8,247.2 917.5,244.0 921.2,248.5 926.2,253.5 931.2,256.0 933.8,259.0 938.8,259.2 942.5,261.0 943.0,264.8 940.0,271.0 942.0,277.2 946.2,283.5 947.5,288.5 943.8,291.0 936.2,294.8 930.0,301.0 926.2,311.0 920.0,318.5 915.0,327.2 911.2,338.5 906.2,348.5 903.8,358.5 905.0,368.5 910.0,377.2 912.5,386.0 911.2,393.5 906.2,398.5 902.5,402.2 903.8,406.0 915.0,401.0 921.2,404.8 930.0,402.2 936.2,401.0 941.2,403.5 950.0,401.0 957.5,403.5 970.0,407.2 977.5,408.5 983.8,412.2 990.0,416.0 997.5,413.5 1001.2,414.8 1001.2,418.5 1005.0,423.5 1003.8,429.8 1000.0,436.0 1002.5,444.8 1010.0,448.5 1017.5,452.2 1026.2,452.2 1030.0,454.8 1036.2,456.0 1042.5,461.0 1047.5,464.8 1047.5,469.8 1055.0,469.8 1058.8,476.0 1066.2,474.8 1075.0,472.2 1082.5,467.2 1090.0,466.0 1088.8,458.5 1091.2,454.8 1092.5,444.8 1100.0,446.0 1108.8,444.8 1107.5,438.5 1112.5,433.5 1113.8,426.0 1118.8,421.0 1126.2,417.2 1132.5,419.8 1136.2,424.8 1137.5,429.8 1145.0,434.8 1153.8,439.8 1151.2,448.5 1148.8,458.5 1150.0,466.0 1147.5,476.0 1148.8,486.0 1143.8,491.0 1140.0,494.8 1145.0,502.2 1142.5,508.5 1135.0,514.8 1138.8,521.0 1131.2,531.0 1133.8,538.5 1135.0,547.2 1147.5,545.5 1153.8,549.8 1158.8,556.0 1157.5,568.5 1155.0,579.8 1150.0,586.0 1143.8,582.2 1135.0,577.2 1125.0,578.5 1117.5,581.0 1110.0,578.5 1103.8,572.2 1097.5,568.5 1096.2,564.8 1098.8,557.2 1093.8,551.5 1090.0,557.2 1082.5,556.0 1072.5,559.8 1062.5,562.2 1061.2,571.0 1055.0,578.5 1048.8,586.0 1050.8,596.0 1048.8,606.0 1050.0,613.5 1048.2,621.0 1053.8,624.8 1061.2,628.0 1068.8,624.8 1073.8,625.5 1077.0,629.8 1080.5,633.5 1078.8,641.0 1071.2,646.0 1070.0,652.2 1067.0,658.5 1068.8,664.8 1075.0,669.8 1080.0,676.0 1084.5,684.8 1081.2,692.2 1076.2,699.0 1068.8,700.5 1062.5,698.5 1058.0,702.2 1051.2,698.5 1055.0,691.0 1051.2,683.5 1043.8,679.8 1037.5,677.2 1036.2,668.5 1034.5,663.5 1037.5,656.0 1030.0,651.0 1026.2,647.2 1022.5,649.8 1017.5,649.0 1015.0,644.8 1008.8,649.8 1000.0,653.5 990.0,658.5 981.2,662.2 972.5,657.2 971.2,668.5 968.8,678.0 960.0,678.5 958.0,676.0 947.5,681.0 936.2,678.5 927.5,676.0 921.2,668.5 916.2,659.8 911.2,652.2 905.0,648.5 904.5,642.2 902.5,633.5 902.0,623.5 903.0,613.5 900.0,612.2 902.5,604.8 896.2,608.5 894.5,616.0 890.0,616.0 883.8,612.2 880.0,604.8 875.0,606.0 870.0,602.2 863.8,606.0 858.8,609.0 857.0,618.5 851.2,627.2 856.2,633.5 859.5,642.2 858.8,653.5 863.0,659.8 864.5,668.5 860.0,678.5 855.5,688.5 852.5,702.2 846.2,706.0 842.5,712.2 838.8,723.5 836.2,726.0 830.5,726.0 823.8,732.2 816.2,738.5 810.0,744.8 814.5,754.8 811.2,764.8 800.0,768.0 797.6,769.7 795.2,773.2 794.6,777.3 797.6,781.7 794.6,783.7 790.0,786.1 786.5,787.8 783.9,786.9 780.1,788.4 780.6,791.9 781.8,794.8 780.9,800.6 781.2,804.4 779.2,806.2 776.9,810.2 773.4,815.2 771.1,817.0 767.2,814.0 766.6,811.1 767.8,806.5 767.2,800.6 766.6,796.0 769.6,793.6 769.9,791.3 767.2,791.3 766.1,794.8 764.9,799.5 763.1,802.4 760.2,803.0 759.1,800.6 756.2,798.9 751.5,794.8 745.7,793.1 738.7,792.7 740.4,786.6 743.3,782.0 747.4,779.1 750.1,773.8 748.6,770.9 751.5,769.4 754.4,767.4 755.0,762.2 751.5,759.8 746.8,756.9 743.3,753.4 737.5,754.9 730.5,751.1 735.2,746.4 738.7,742.9 743.3,739.4 749.2,736.5 753.8,734.7 754.4,730.7 752.7,727.2 750.0,724.8 742.5,728.5 741.2,733.5 736.2,736.0 730.0,734.8 723.8,738.5 720.0,744.8 715.0,752.2 710.0,749.8 705.0,746.0 695.0,746.0 692.5,738.5 688.8,734.8 683.8,729.8 680.0,722.2 675.0,716.0 673.8,711.0 667.5,708.5 660.0,704.8 652.5,699.8 651.2,696.0 655.0,693.5 650.0,686.0 647.5,682.2 651.2,678.5 652.5,671.0 656.2,663.5 657.0,653.5 655.0,644.8 655.5,636.0 653.8,629.8 651.2,624.0 643.8,626.0 637.5,627.2 630.0,629.8 623.8,636.0 616.2,638.5 613.8,643.5 619.5,646.0 618.8,653.5 612.5,658.5 607.5,661.0 606.2,667.2 600.0,669.8 596.2,674.8 592.5,679.8 586.2,684.8 580.0,688.5 568.8,696.0 563.8,698.5 568.8,703.5 575.0,708.5 578.8,714.8 581.2,722.2 583.0,728.5 580.0,734.8 580.0,741.0 575.0,746.0 567.5,751.0 557.5,754.8 550.0,757.2 549.5,766.0 550.5,772.2 546.2,777.2 545.0,786.0 537.5,791.0 527.5,793.5 520.0,797.2 513.8,802.2 511.2,808.5 510.0,817.2 506.2,822.2 492.5,821.0 485.0,816.0 478.8,813.5 471.2,818.5 467.5,812.2 463.8,806.0 457.5,802.2 450.0,803.0 442.5,802.2 436.2,801.5 434.5,797.2 427.5,798.5 426.2,806.0 417.5,807.2 410.0,811.0 405.0,816.0 398.8,819.8 392.5,826.0 386.2,829.0 380.0,824.8 372.5,823.5 363.8,822.2 357.5,829.8 350.0,832.2 342.5,836.0 336.2,841.0 330.0,836.0 323.8,838.5 316.2,843.5 312.5,838.5 310.0,832.2 305.0,826.0 302.5,819.8 298.8,812.2 293.8,804.8 295.0,799.8 288.8,793.5 283.8,786.0 277.5,778.5 272.5,772.2 265.0,776.0 258.8,772.2 261.2,764.8 260.0,758.5 263.8,748.5 256.2,746.0 246.2,743.5 238.8,736.0 241.2,728.5 243.8,721.0 241.2,713.5 246.2,707.2 250.0,701.0 253.8,694.8 257.5,688.5 252.5,682.2 246.2,677.2 241.2,671.0 237.5,664.8 233.8,661.0 236.2,657.2 242.5,654.8 243.8,650.5 250.0,651.5 257.5,649.8 266.2,648.0 272.5,644.8 271.2,639.8 265.0,636.0 260.0,631.0 255.0,626.0 245.0,622.2 236.2,619.8 228.8,616.0 220.0,615.5 220.0,615.5 212.5,611.0 207.5,608.5 200.0,606.0 191.2,606.5 185.0,604.8 178.8,607.2 171.2,605.5 165.0,609.8 160.0,616.0 151.2,621.0 143.8,623.5 136.2,624.8 128.8,624.0 122.5,629.8 116.2,636.0 112.5,643.5 107.5,648.5 102.5,653.5 98.8,661.0 93.8,664.8 91.2,672.2 86.2,679.8 83.8,686.0 81.2,693.5 79.5,701.0 80.0,708.5 85.0,706.0 87.5,699.8 91.2,696.0 94.5,691.0 98.8,688.5 101.2,682.2 103.8,681.0 104.5,686.0 101.2,691.0 105.0,696.0 107.5,699.8 112.5,696.0 115.0,694.8 117.5,698.5 113.8,704.8 110.0,708.5 105.0,711.0 100.0,714.8 92.5,719.8 87.5,723.5 85.0,728.5 77.5,733.5 70.0,737.2 62.5,735.5 53.8,738.5 47.5,739.8 40.0,737.2 33.8,738.5 28.8,741.5 31.2,736.0 35.0,729.8 37.5,723.5 33.8,718.5 31.2,716.0 35.0,711.0 42.5,708.5 48.8,703.5 56.2,702.2 62.5,699.8 68.8,698.5 71.2,693.5 67.5,686.0 68.8,679.8 72.5,674.8 76.2,668.5 80.0,661.0 82.5,656.0 75.0,649.8 65.0,643.5 58.0,638.5 61.2,632.2 65.0,627.2 61.2,622.2 60.0,616.0 66.2,609.8 70.0,602.2 75.0,594.8 81.2,588.5 76.2,584.8 70.5,581.5 75.0,576.0 82.5,569.0 100.0,551.0 140.0,516.0 190.0,466.0 240.0,411.0 290.0,356.0 330.0,311.0 370.0,276.0 400.0,251.0"/><polygon points="799.9,789.6 798.7,787.2 794.6,789.0 790.0,791.3 787.4,793.9 788.2,796.0 785.3,800.1 783.6,802.4 783.6,805.3 782.4,807.6 784.7,811.1 787.1,815.8 788.2,819.3 787.4,821.9 786.2,821.0 785.9,817.0 783.6,812.9 780.6,810.0 778.9,811.7 775.4,816.4 771.9,819.3 773.1,822.8 772.5,825.1 774.8,828.6 776.6,833.3 779.5,835.6 775.4,838.0 771.3,843.8 770.7,849.6 774.8,847.9 778.3,845.0 783.6,846.1 787.6,847.9 791.7,847.3 792.5,851.9 797.0,853.1 801.6,851.9 802.8,848.4 803.0,845.0 806.3,840.3 806.9,833.3 812.1,830.4 814.7,824.0 812.7,819.3 807.5,816.4 802.8,812.9 798.1,812.9 797.6,807.6 796.4,801.8 792.9,798.9 791.7,796.0 795.8,793.6"/></g><g fill="none" stroke="#232323" stroke-width="1" stroke-linejoin="round"><polyline points="800.0,249.8 810.0,252.2 820.0,248.5 825.0,251.0 832.5,253.0 843.8,254.8 851.2,251.0 860.0,252.2 861.2,246.0 855.0,244.8 851.2,241.0 856.2,237.2 863.8,234.8 866.2,239.8 870.0,242.2 867.5,246.0 871.2,248.5 875.0,252.2 881.2,251.0 883.8,244.8 886.2,241.0"/><polyline points="930.0,257.2 927.5,259.8 920.0,257.2 913.8,256.0 910.0,258.5 905.0,264.8 895.0,267.2 887.5,271.0 885.0,277.2 875.0,278.5 862.5,281.0 850.0,282.2 838.8,284.8 836.2,291.0 830.0,297.2 833.8,302.2 838.8,306.0 835.0,312.2 837.5,319.8 833.8,326.0 840.0,329.8 847.5,331.0 853.8,328.0 860.0,332.2 866.2,337.2 877.5,341.0 887.5,334.8 896.2,328.5 901.2,322.2 903.8,311.0 905.0,301.0 906.2,291.0 907.5,283.5 911.2,276.0 910.0,271.0 916.2,269.8 925.0,266.0 935.0,266.0"/><polyline points="905.0,299.8 898.8,298.5 892.5,294.8 887.5,292.2 882.5,289.8 875.0,286.0 868.8,287.2 871.2,293.5 866.2,299.8 860.0,308.5 858.8,316.0 862.0,326.0 866.2,337.2"/><polyline points="911.2,276.0 917.5,274.8 915.0,279.8 922.5,278.5 920.0,273.5 927.5,272.2 925.0,268.5 932.5,269.8"/><polyline points="831.2,384.8 832.0,401.0 825.0,407.2 819.5,412.2 827.5,416.0 837.5,413.5 843.8,417.2 846.2,426.0 846.2,436.0 844.5,446.0 847.5,452.2 847.5,457.2 837.5,463.5 827.5,468.5 820.0,473.5 813.8,480.5 807.5,476.0 800.0,472.2"/><polyline points="847.5,457.2 860.0,459.8 875.0,462.2 887.5,463.5 896.2,469.0 901.2,461.0 906.2,451.0 910.0,441.0 918.8,432.2 915.0,424.8 910.0,416.0 905.0,408.5 902.5,404.8"/><polyline points="793.8,586.0 792.5,596.0 796.2,606.0 802.5,613.5 810.0,617.2 812.5,626.0 813.8,638.5 811.2,648.5 812.5,658.5 807.5,668.5 806.2,677.2 803.8,682.2 807.0,691.0 810.0,701.0 815.0,708.5 822.5,716.0 826.2,722.2 831.2,725.5"/><polyline points="637.5,627.2 637.5,613.5 650.0,611.0 658.8,598.5 667.5,596.0"/><polyline points="257.5,649.8 262.5,658.5 270.0,666.0 273.8,674.8 276.2,686.0 282.5,696.0 287.5,703.5 293.8,713.5 299.5,723.5 308.8,718.5 317.5,713.5 322.5,707.2 330.0,701.0 336.2,693.5 342.5,688.5 340.0,681.0 345.0,673.5 343.8,663.5 340.0,653.5 342.5,643.5 340.0,633.5 347.5,628.5 350.0,616.0 348.8,608.5 352.5,601.0 350.0,593.5"/><polyline points="350.0,593.5 362.5,586.0 368.0,581.0 371.0,578.0 370.0,570.0"/><polyline points="345.0,673.5 355.0,671.0 356.2,662.2 362.5,659.8 368.8,657.2 369.5,667.2 380.0,663.5 390.0,658.5 400.0,653.5 406.2,656.0 411.2,653.5 413.8,658.5 422.5,656.0 427.5,652.2 423.8,646.0 430.0,643.5 440.0,639.8 443.8,634.8 447.5,631.8 457.5,634.8 470.0,639.8 480.0,633.5 490.0,627.2 500.0,619.8 512.5,614.8 523.8,609.8 532.5,603.5 533.8,597.2 531.2,593.5"/><polyline points="568.8,594.8 577.5,598.5 587.5,601.5 600.0,599.8 612.5,596.0 620.0,593.5"/><polyline points="82.5,656.5 88.8,659.8 94.5,662.8"/><polyline points="72.0,675.2 78.8,679.0 85.0,683.0"/><polyline points="241.2,569.0 243.8,576.0 240.0,583.5 250.0,584.8 260.0,586.0 267.0,587.2 265.0,592.2 260.0,597.2 252.5,596.0 246.2,598.5 245.0,602.2 250.0,608.5 255.0,612.2 260.0,608.5 262.5,603.5 267.5,607.2 275.0,606.0 282.5,611.0 287.5,619.8 286.2,628.5 287.5,633.0 295.0,631.0 302.5,622.2 310.0,616.0 318.8,612.2 325.0,606.0 332.5,601.0 338.8,596.0 341.2,599.8 351.2,593.5"/><polyline points="626.0,286.0 633.5,288.2 635.0,293.5 637.2,299.5 638.8,305.5 641.0,310.8 646.2,311.5 650.0,308.5"/><polyline points="648.5,310.8 645.5,316.0 641.8,321.2 638.0,325.0 633.5,326.2 635.0,331.0 636.5,337.0 638.8,343.0 635.8,347.5 636.5,353.5 638.0,361.0 640.2,367.0 641.0,373.0 641.8,379.8 641.0,385.8 647.0,384.2 651.5,382.8"/><polyline points="638.8,343.0 640.2,347.5 647.0,349.0 651.5,352.0 657.5,353.5 663.5,352.0 668.0,350.5 674.0,349.8 680.0,350.5 684.5,354.2 688.2,357.2 692.0,361.0 693.5,366.2 698.0,368.5 701.8,367.8 702.5,371.5 708.5,372.2 710.0,374.5 708.5,379.0 706.2,383.5 702.5,388.0 698.8,391.8 695.0,394.8 690.5,396.2 686.0,397.0 681.5,398.5 678.5,396.2 674.0,396.2 668.0,397.0"/><polyline points="635.0,404.5 637.2,400.0 640.2,395.5 644.0,391.8 650.0,389.8 657.5,389.5"/><polyline points="702.5,367.8 706.2,364.0 707.8,361.0 711.5,358.0 714.5,355.8"/><polyline points="769.2,348.2 773.0,349.0 776.8,350.5 776.0,355.0 773.0,358.0 776.0,361.8 780.5,363.2 785.0,366.2 791.0,371.5 797.0,377.5 800.0,379.8"/><polyline points="785.0,366.2 780.5,371.5 776.8,376.0 777.5,382.0 776.0,388.0 773.0,392.5 773.8,398.5 771.5,404.5 768.5,409.0 764.0,413.5 759.5,418.8 762.5,424.0 765.5,428.5 770.0,433.8 774.5,439.0 777.5,442.8 776.0,448.0 776.8,452.5 773.0,455.5 767.0,458.5 761.0,461.5 755.0,463.8 749.0,460.8 744.5,454.0 742.2,449.5 737.0,451.8 732.5,450.2 726.5,451.8 721.2,454.0 716.0,457.8 711.5,454.0 707.0,450.2 701.0,448.8 695.0,447.2 692.0,446.5"/><polyline points="764.0,286.0 769.2,292.0 774.5,289.0 780.5,286.0"/><polyline points="769.2,292.0 773.0,296.5 776.0,301.0 777.5,307.0 779.0,313.0 776.0,316.8 771.5,320.5 767.0,325.0 769.2,329.5 765.5,332.5 759.5,335.5 752.0,337.0 744.5,337.8 737.0,338.5 732.5,341.5"/><polyline points="635.0,404.5 639.5,408.2 645.5,412.0 653.0,416.5 659.0,421.0 663.5,424.0 662.0,427.8"/><polyline points="429.5,227.2 431.0,231.0 429.5,234.8 432.5,235.5 436.2,238.5 438.5,243.8 441.5,240.0 445.2,236.2 446.8,231.0 451.2,229.8 455.0,229.5"/><polyline points="467.8,237.8 476.0,241.5 485.0,244.5 486.2,251.2 489.5,252.3 494.8,249.0 496.7,240.8 499.7,238.5 504.2,241.5 508.2,246.0 512.0,251.2 515.0,256.5 523.2,256.8 523.7,264.0 526.2,267.8 524.8,271.5 527.8,278.2 530.0,277.5 533.8,274.5 531.5,266.2 528.5,267.0 526.2,267.8"/><polyline points="527.8,278.2 521.0,282.8 515.0,287.2 510.5,285.3 507.5,288.0 506.0,293.2 500.0,294.8 494.0,297.8 490.2,300.0 487.2,308.2 482.0,309.0 476.8,306.8 473.0,302.2 468.5,298.5 462.5,297.0 456.5,298.5 450.5,299.2 449.0,292.5 447.5,285.8 453.5,282.8 458.0,280.5 460.2,275.2 459.5,270.0 463.2,265.5 466.2,261.0 462.5,257.2 456.5,255.8 455.8,252.8 452.8,254.2 447.5,252.8"/><polyline points="446.0,261.0 446.0,267.0 443.8,275.2 439.2,276.8 434.8,275.2 432.5,273.8 434.0,281.2 426.5,283.5 420.5,285.0 415.2,286.5"/><polyline points="415.2,265.5 422.8,264.8 423.5,256.5 422.0,251.2 415.2,251.2"/><polyline points="415.2,297.8 420.5,298.5 425.0,303.0 429.5,309.0 432.5,312.0 428.0,315.8 422.0,319.5 415.2,321.8"/><polyline points="415.2,318.0 421.2,315.8 427.2,313.5 428.8,311.2 425.0,312.0 419.0,315.0 415.2,315.8"/><polyline points="527.8,278.2 533.0,279.8 538.2,283.5 542.0,288.0 545.0,292.5 543.5,298.5 540.5,303.8 539.0,309.0 534.5,312.8 530.0,315.0 525.5,316.5 524.8,312.0 519.5,310.5 514.2,309.8 512.0,315.0 507.5,318.8 503.8,322.5 500.8,327.8 498.5,333.0 494.8,336.8"/><polyline points="435.5,332.2 443.8,330.8 452.0,328.5 459.5,326.2 464.0,330.0 469.2,333.8 474.5,337.5 479.0,338.2 480.5,334.5 484.2,337.5 488.0,334.5 491.8,337.2 494.8,336.8"/><polyline points="435.5,332.2 438.5,337.5 439.2,343.5 443.8,347.2 449.8,349.5 451.2,355.5 454.2,359.2 455.0,375.0 461.0,371.2 464.0,373.5 461.0,376.5 455.0,377.2 447.5,377.2 440.0,378.0 435.5,375.0 431.0,371.2 425.0,372.0 421.2,375.0 418.2,382.5 415.2,388.5"/><polyline points="494.8,336.8 497.0,343.5 498.5,348.0 501.5,354.0 504.5,360.0 507.5,366.0 509.0,373.5 508.2,381.0 506.0,388.5 506.0,396.0"/><polyline points="498.5,346.5 506.0,345.0 513.5,343.5 521.0,345.8 526.2,340.5 527.8,334.5 527.0,332.2 533.0,331.2 538.2,330.8 541.2,336.0 542.0,342.0 548.0,341.2 552.5,339.8 556.2,338.2 561.5,336.0 564.5,340.5 569.0,343.5 575.0,341.2 581.0,339.8 581.8,341.2 576.5,344.2 579.5,348.0 582.5,350.2 587.8,349.5 589.2,343.5 592.2,337.5 596.0,331.5 600.5,327.8 606.5,330.0 611.0,334.5 613.2,340.5 617.0,348.0 619.2,355.5 621.5,363.0 624.5,370.5 627.5,375.0 633.5,379.5 639.5,380.2 641.0,372.0 639.5,366.0"/><polyline points="641.0,225.0 638.8,231.0 635.0,235.5 634.2,240.8 629.0,244.5 625.2,247.5 626.8,255.0 627.5,261.0 631.2,266.2 632.0,273.0 630.5,279.0 626.8,285.0 633.5,286.5 635.0,292.5 637.2,300.0 639.5,307.5 641.0,312.0 647.0,312.0 650.0,309.0"/><polyline points="650.0,324.0 641.0,325.5 634.2,326.2 636.5,333.0 639.5,340.5 642.5,346.5 650.0,348.0"/><polyline points="506.0,386.0 508.2,393.5 509.0,402.5 506.0,411.5 509.0,417.5 513.5,425.0 521.0,428.0 527.0,429.5 526.2,438.5 522.5,446.0 518.0,452.0 513.5,457.2 508.2,460.2 506.0,465.5 509.0,469.2 504.5,473.0 506.0,480.5 507.2,485.8"/><polyline points="552.5,485.8 556.2,479.0 557.0,470.0 561.5,464.0 564.5,463.2 566.8,468.5 571.2,461.0 575.0,455.0 578.8,450.5 575.8,446.0 581.0,441.5 587.0,440.0 593.0,438.5 593.8,434.8 597.5,433.7 599.0,436.2 603.5,437.0 609.5,437.8"/><polyline points="594.5,434.8 599.0,432.5 605.0,431.8 611.0,430.7 615.5,430.2"/><polyline points="615.5,443.8 611.8,446.0 611.0,450.5 615.5,455.0 622.2,456.5 622.7,464.0 621.8,471.5 620.8,479.0 620.0,485.8"/><polyline points="629.0,482.0 631.2,476.0 635.0,479.8 639.5,482.0 643.2,478.2 650.0,477.5"/><polyline points="699.5,181.2 701.8,188.8 704.8,195.5 710.0,197.8 717.5,198.5 722.0,194.8 728.0,191.0 732.5,189.5 731.8,194.0 737.0,196.2 737.8,200.8 735.5,205.2 731.0,207.5 725.0,206.0 719.8,205.2 717.5,208.2 719.0,213.5 725.0,215.8 731.0,218.8 735.5,223.2 740.0,224.0 744.5,225.5 740.8,229.2 741.5,233.8 746.0,235.2 752.0,236.0 755.8,238.2 756.5,245.0 755.8,251.0 753.5,257.0 755.0,262.2 758.0,267.5 761.8,270.5 764.8,271.2 761.8,274.2 760.2,281.0 761.8,284.8 767.0,288.5 769.2,291.5"/><polyline points="769.2,291.5 773.0,287.0 776.0,282.5 776.8,278.0 779.0,273.5 783.5,270.5 788.0,269.0 792.5,267.5 797.0,266.0 791.0,263.0 787.2,262.2 788.0,257.8 785.0,255.5 784.2,251.8 788.0,249.8 794.0,249.2 800.0,249.5 803.0,252.8 809.0,252.2 815.0,251.0 819.5,249.5 821.0,246.2 825.5,248.0 831.5,249.8 833.0,253.2 837.5,252.8 842.8,254.8 846.5,254.0 851.0,251.8 854.8,253.2 858.5,249.5 857.8,246.5 852.5,245.0 854.0,242.0 851.0,241.2 854.8,237.5 860.0,236.0 864.5,234.8 866.8,238.2 863.8,241.2 867.5,244.2 871.2,246.5 872.8,250.2 877.2,251.0 880.2,253.2 881.8,249.5 883.2,245.8 886.2,242.0"/><polyline points="769.2,291.5 773.0,296.0 776.0,302.0 778.2,308.0 779.0,312.5 776.0,317.0 771.5,320.8 767.8,324.5 769.2,329.0 768.5,333.5 764.0,335.0 755.0,337.2 746.0,338.8 737.0,339.5 731.0,340.2"/><polyline points="676.0,446.0 673.8,452.0 667.0,456.5 659.5,458.8 655.0,461.8 652.8,465.5 656.5,470.0 655.0,476.0 654.2,482.0 661.0,482.8 664.8,485.8"/><polyline points="628.0,485.8 630.2,480.5 628.8,477.5 631.8,475.2 633.2,478.2 637.0,477.5 643.0,476.8 646.0,482.0 654.2,482.0"/><polyline points="610.0,446.0 609.2,450.5 613.8,455.0 620.5,456.5 622.8,462.5 621.2,468.5 619.8,476.0 620.2,485.8"/><polyline points="692.5,446.0 698.5,447.5 706.0,450.5 712.0,455.0 715.0,458.0 721.0,453.5 728.5,450.5 733.0,452.8 737.5,449.8 742.8,452.0 744.2,457.2 748.8,460.2 749.5,468.5 757.0,464.0 764.5,459.5 771.2,456.5 776.5,452.8 775.0,447.5 776.5,446.0"/><polyline points="771.2,456.5 774.2,462.5 775.8,471.5 769.0,474.5 761.5,479.8 754.8,485.0 757.0,489.5 756.2,494.8 751.0,499.2 745.0,503.0 743.5,509.0 745.0,512.0 742.0,515.0 739.8,520.2 736.0,524.0 731.5,525.5 728.5,523.2 724.8,527.0 722.5,531.5"/><polyline points="756.2,494.8 762.2,495.5 767.5,500.0 773.5,498.5 781.0,496.2 788.5,494.0 793.0,489.5 796.0,483.5 797.5,476.0 802.0,473.0 808.0,474.5 813.2,479.8 820.0,476.8"/><polyline points="721.8,581.8 728.5,583.2 736.0,584.8 745.0,585.5 752.5,583.2 760.0,579.5 767.5,575.0 766.0,570.5 764.5,566.0 769.0,563.8 773.5,564.5 777.2,561.5 779.5,566.0 780.2,570.5 787.0,567.5 793.0,570.5 797.5,575.0 799.0,578.0 797.5,581.0"/><polyline points="580.0,599.0 586.0,602.0 595.0,601.2 604.0,599.0 613.0,594.5"/><polyline points="646.0,594.5 652.0,597.5 659.5,599.8 668.5,595.2"/><polyline points="659.5,599.8 655.0,605.0 650.5,611.0 637.0,612.5 637.8,618.5 638.5,626.0"/><polyline points="683.8,187.9 685.6,186.0 688.1,181.6 690.0,179.8 693.8,179.5 697.5,181.0 699.5,181.2"/><polyline points="699.5,181.2 702.5,179.8 707.5,179.1 712.5,179.1 714.4,178.5"/><polyline points="678.5,211.2 675.0,213.5 670.0,216.2 667.5,219.8 668.1,224.8 670.0,227.9"/><polyline points="682.5,211.2 680.0,215.4 676.9,219.8 674.4,224.8 671.9,228.5"/></g><g fill="#fff" stroke="#232323" stroke-width=".9" stroke-linejoin="round"><polygon points="699.0,173.2 701.9,172.0 703.5,174.5 706.9,172.0 709.8,177.5 707.5,178.5 703.1,177.5 700.0,181.6 698.1,181.0 701.2,176.6"/><polygon points="808.8,378.5 815.0,376.8 825.0,379.0 837.5,380.5 850.0,379.8 858.0,381.0 857.0,384.0 847.5,385.2 835.0,384.8 822.5,383.0 812.5,381.0"/><polygon points="671.8,304.0 675.5,305.5 677.8,310.8 680.0,317.5 683.8,323.5 687.5,329.5 693.5,332.5 699.5,335.5 704.0,339.2 710.0,343.0 716.0,345.2 723.5,345.2 729.5,346.0 734.0,346.8 735.5,350.5 732.5,353.5 725.0,353.5 719.0,354.2 714.5,355.8 711.5,352.8 707.0,347.5 702.5,343.0 698.0,338.5 692.0,335.5 686.0,333.2 682.2,329.5 678.5,323.5 675.5,317.5 673.2,311.5"/><polygon points="734.0,352.8 740.0,351.2 746.0,350.5 753.5,349.0 761.0,347.5 768.5,347.5 769.2,349.8 762.5,352.0 755.0,354.2 749.0,356.5 744.5,358.8 740.0,357.2 736.2,355.8"/><polygon points="698.8,296.5 701.8,298.0 704.8,302.5 708.5,307.0 710.8,310.0 709.2,313.0 706.2,310.0 703.2,305.5 700.2,301.0"/><polygon points="587.0,316.8 589.2,316.0 591.5,322.0 593.8,329.5 594.8,337.0 593.3,340.8 591.5,337.0 590.0,329.5 588.2,322.8"/><polygon points="598.7,353.2 601.7,352.8 603.5,357.2 605.0,361.8 602.8,364.0 600.5,359.5"/><polygon points="569.0,370.0 572.8,370.8 578.0,375.2 582.5,379.0 584.8,382.8 584.0,386.5 581.0,387.2 576.5,384.2 572.0,379.8 568.7,375.2"/><polygon points="652.2,369.2 656.0,370.0 662.0,370.8 663.5,376.0 661.2,382.0 659.8,388.0 662.8,392.5 665.8,397.0 667.2,401.5 666.5,406.0 663.5,404.5 659.0,400.8 653.8,396.2 656.0,391.0 658.2,386.5 656.0,382.0 653.0,376.0"/><polygon points="684.5,380.5 687.5,380.8 691.2,382.8 694.2,385.8 695.8,389.5 694.2,391.8 692.0,388.8 689.0,385.8 685.7,384.2"/><polygon points="725.8,376.0 728.8,374.5 731.0,373.8 732.5,379.0 734.0,385.0 734.8,389.5 737.0,392.5 739.2,395.5 737.8,397.8 734.8,394.0 731.8,390.2 730.2,385.0 728.0,380.5"/><polygon points="616.2,411.2 619.2,410.5 623.0,413.5 626.0,418.0 630.5,416.5 635.0,412.0 639.5,407.5 643.2,403.8 645.5,400.8 646.2,403.8 643.2,409.0 640.2,413.5 637.2,418.0 639.5,421.0 644.0,418.8 650.0,420.2 654.5,422.5 657.5,425.5 659.0,430.0 663.5,432.2 669.5,431.5 675.5,430.0 680.0,429.2 681.5,429.2 683.5,429.5 685.0,431.0 688.0,432.0 689.5,434.0 689.3,437.0 690.0,441.0 691.2,445.5 691.5,448.5 690.0,452.0 689.0,454.5 690.5,456.5 692.5,459.0 693.0,463.0 691.0,465.0 689.0,466.5 687.8,469.5 686.0,467.5 685.7,464.0 686.0,460.0 685.0,458.0 683.5,456.0 682.0,454.5 683.0,451.0 684.5,446.0 685.5,442.0 685.7,438.0 685.0,435.0 683.5,433.8 681.5,434.2 679.0,436.0 678.5,436.0 674.0,437.5 669.5,439.8 665.0,442.0 660.5,442.8 656.0,441.2 650.0,439.0 645.5,437.5 642.2,435.2 644.0,433.0 649.2,432.2 653.0,430.0 650.0,428.5 644.0,428.5 638.0,427.8 633.5,428.5 629.0,429.2 626.0,432.2 622.2,436.0 620.0,433.8 617.8,430.0 614.8,427.0 616.2,426.2 619.2,428.5 621.5,427.8 622.2,423.2 623.0,419.5 620.0,415.8"/><polygon points="608.8,445.0 612.5,443.5 617.8,442.0 618.5,443.5 614.0,445.8 610.2,447.2"/><polygon points="415.2,241.2 421.2,240.4 422.3,243.0 419.0,244.8 415.2,245.2"/><polygon points="415.0,246.8 417.2,249.3 415.0,253.2"/><polygon points="596.8,470.8 598.7,471.5 599.3,474.5 596.0,478.2 592.2,482.0 589.2,485.0 587.0,484.2 587.8,480.5 591.5,476.8 594.5,473.8"/></g><g fill="#c0b398" stroke="#262626" stroke-width="1.2"><circle cx="643.8" cy="127.9" r="3.5"/><circle cx="731.2" cy="135.4" r="3.5"/><circle cx="732.5" cy="136.6" r="3.5"/><circle cx="760.0" cy="140.8" r="3.5"/><circle cx="785.6" cy="137.9" r="3.5"/><circle cx="791.5" cy="133.8" r="3.5"/><circle cx="803.8" cy="142.0" r="3.5"/><circle cx="796.0" cy="148.5" r="3.5"/><circle cx="731.0" cy="152.6" r="3.5"/><circle cx="740.6" cy="153.5" r="3.5"/><circle cx="737.5" cy="155.0" r="3.5"/><circle cx="780.0" cy="161.6" r="3.5"/><circle cx="706.9" cy="158.8" r="3.5"/><circle cx="693.1" cy="170.6" r="3.5"/><circle cx="768.8" cy="168.5" r="3.5"/><circle cx="774.0" cy="171.6" r="3.5"/><circle cx="791.2" cy="166.6" r="3.5"/><circle cx="793.1" cy="167.5" r="3.5"/><circle cx="795.0" cy="168.5" r="3.5"/><circle cx="798.8" cy="171.6" r="3.5"/><circle cx="800.6" cy="171.0" r="3.5"/><circle cx="818.8" cy="159.8" r="3.5"/><circle cx="820.0" cy="162.2" r="3.5"/><circle cx="779.8" cy="177.9" r="3.5"/><circle cx="779.8" cy="181.6" r="3.5"/><circle cx="771.9" cy="185.4" r="3.5"/><circle cx="818.8" cy="184.1" r="3.5"/><circle cx="750.0" cy="191.6" r="3.5"/><circle cx="755.0" cy="192.6" r="3.5"/><circle cx="683.1" cy="198.5" r="3.5"/><circle cx="705.9" cy="198.8" r="3.5"/><circle cx="736.0" cy="206.9" r="3.5"/><circle cx="756.9" cy="223.8" r="3.5"/><circle cx="765.0" cy="223.8" r="3.5"/><circle cx="746.9" cy="228.8" r="3.5"/><circle cx="670.0" cy="229.5" r="3.5"/><circle cx="699.0" cy="239.8" r="3.5"/><circle cx="700.6" cy="239.8" r="3.5"/><circle cx="721.9" cy="245.8" r="3.5"/><circle cx="810.0" cy="238.9" r="3.5"/><circle cx="886.8" cy="238.5" r="3.5"/><circle cx="885.8" cy="244.0" r="3.5"/><circle cx="894.5" cy="253.5" r="3.5"/><circle cx="826.2" cy="280.5" r="3.5"/><circle cx="911.8" cy="291.0" r="3.5"/><circle cx="868.0" cy="354.0" r="3.5"/><circle cx="843.8" cy="369.8" r="3.5"/><circle cx="865.0" cy="370.8" r="3.5"/><circle cx="913.8" cy="381.0" r="3.5"/><circle cx="910.0" cy="401.0" r="3.5"/><circle cx="1007.0" cy="391.0" r="3.5"/><circle cx="925.8" cy="447.8" r="3.5"/><circle cx="887.5" cy="468.5" r="3.5"/><circle cx="1078.0" cy="441.5" r="3.5"/><circle cx="1095.8" cy="448.5" r="3.5"/><circle cx="1053.8" cy="456.5" r="3.5"/><circle cx="1060.8" cy="455.5" r="3.5"/><circle cx="1096.8" cy="470.5" r="3.5"/><circle cx="1123.8" cy="477.8" r="3.5"/><circle cx="1176.0" cy="481.8" r="3.5"/><circle cx="995.0" cy="501.8" r="3.5"/><circle cx="1073.0" cy="501.0" r="3.5"/><circle cx="887.5" cy="518.5" r="3.5"/><circle cx="893.8" cy="529.0" r="3.5"/><circle cx="898.0" cy="536.0" r="3.5"/><circle cx="919.8" cy="547.8" r="3.5"/><circle cx="853.0" cy="559.8" r="3.5"/><circle cx="939.0" cy="571.0" r="3.5"/><circle cx="956.8" cy="580.8" r="3.5"/><circle cx="1017.8" cy="568.8" r="3.5"/><circle cx="1130.8" cy="554.8" r="3.5"/><circle cx="1180.0" cy="536.0" r="3.5"/><circle cx="870.0" cy="603.5" r="3.5"/><circle cx="948.8" cy="608.8" r="3.5"/><circle cx="847.0" cy="645.5" r="3.5"/><circle cx="826.0" cy="693.5" r="3.5"/><circle cx="663.8" cy="631.8" r="3.5"/><circle cx="673.8" cy="658.8" r="3.5"/><circle cx="795.8" cy="717.5" r="3.5"/><circle cx="892.8" cy="829.5" r="3.5"/><circle cx="879.8" cy="847.8" r="3.5"/><circle cx="313.0" cy="595.0" r="3.5"/><circle cx="323.8" cy="620.8" r="3.5"/><circle cx="251.8" cy="623.8" r="3.5"/><circle cx="469.5" cy="641.8" r="3.5"/><circle cx="278.0" cy="693.0" r="3.5"/><circle cx="507.8" cy="681.8" r="3.5"/><circle cx="575.8" cy="691.8" r="3.5"/><circle cx="578.0" cy="694.8" r="3.5"/><circle cx="394.0" cy="694.0" r="3.5"/><circle cx="395.0" cy="701.8" r="3.5"/><circle cx="399.0" cy="701.8" r="3.5"/><circle cx="372.0" cy="703.8" r="3.5"/><circle cx="380.0" cy="708.0" r="3.5"/><circle cx="380.8" cy="709.0" r="3.5"/><circle cx="366.0" cy="719.8" r="3.5"/><circle cx="391.8" cy="717.8" r="3.5"/><circle cx="415.8" cy="747.8" r="3.5"/><circle cx="326.5" cy="763.0" r="3.5"/><circle cx="342.5" cy="761.8" r="3.5"/><circle cx="410.8" cy="782.8" r="3.5"/><circle cx="477.8" cy="783.8" r="3.5"/><circle cx="366.2" cy="885.5" r="3.5"/><circle cx="176.8" cy="582.8" r="3.5"/><circle cx="189.5" cy="602.2" r="3.5"/><circle cx="193.8" cy="606.0" r="3.5"/><circle cx="200.0" cy="602.2" r="3.5"/><circle cx="206.5" cy="607.8" r="3.5"/><circle cx="136.8" cy="621.8" r="3.5"/><circle cx="105.0" cy="673.8" r="3.5"/><circle cx="139.0" cy="668.0" r="3.5"/><circle cx="156.0" cy="663.5" r="3.5"/><circle cx="157.8" cy="669.8" r="3.5"/><circle cx="93.8" cy="693.8" r="3.5"/><circle cx="87.8" cy="704.8" r="3.5"/><circle cx="121.8" cy="702.0" r="3.5"/><circle cx="75.8" cy="714.8" r="3.5"/><circle cx="81.8" cy="714.8" r="3.5"/><circle cx="108.8" cy="819.2" r="3.5"/><circle cx="108.8" cy="824.8" r="3.5"/><circle cx="71.8" cy="824.8" r="3.5"/><circle cx="75.8" cy="823.5" r="3.5"/><circle cx="581.0" cy="290.9" r="3.5"/><circle cx="624.8" cy="296.8" r="3.5"/><circle cx="648.0" cy="299.8" r="3.5"/><circle cx="648.8" cy="305.5" r="3.5"/><circle cx="671.0" cy="297.2" r="3.5"/><circle cx="673.2" cy="299.5" r="3.5"/><circle cx="668.0" cy="305.5" r="3.5"/><circle cx="694.5" cy="295.8" r="3.5"/><circle cx="695.8" cy="303.2" r="3.5"/><circle cx="699.2" cy="307.8" r="3.5"/><circle cx="725.0" cy="291.7" r="3.5"/><circle cx="616.7" cy="325.8" r="3.5"/><circle cx="642.8" cy="323.8" r="3.5"/><circle cx="647.0" cy="336.7" r="3.5"/><circle cx="651.0" cy="339.5" r="3.5"/><circle cx="650.9" cy="352.5" r="3.5"/><circle cx="689.0" cy="329.2" r="3.5"/><circle cx="693.5" cy="326.5" r="3.5"/><circle cx="698.8" cy="325.8" r="3.5"/><circle cx="704.8" cy="333.7" r="3.5"/><circle cx="708.8" cy="337.0" r="3.5"/><circle cx="701.8" cy="347.5" r="3.5"/><circle cx="731.0" cy="341.8" r="3.5"/><circle cx="738.5" cy="347.8" r="3.5"/><circle cx="723.8" cy="354.7" r="3.5"/><circle cx="755.8" cy="345.7" r="3.5"/><circle cx="764.0" cy="340.8" r="3.5"/><circle cx="769.7" cy="342.7" r="3.5"/><circle cx="767.0" cy="343.8" r="3.5"/><circle cx="666.8" cy="355.8" r="3.5"/><circle cx="667.2" cy="358.0" r="3.5"/><circle cx="666.5" cy="360.2" r="3.5"/><circle cx="657.2" cy="361.8" r="3.5"/><circle cx="642.8" cy="367.0" r="3.5"/><circle cx="648.5" cy="367.0" r="3.5"/><circle cx="652.2" cy="366.2" r="3.5"/><circle cx="660.5" cy="367.0" r="3.5"/><circle cx="663.8" cy="367.8" r="3.5"/><circle cx="653.0" cy="380.5" r="3.5"/><circle cx="608.0" cy="364.3" r="3.5"/><circle cx="571.0" cy="365.5" r="3.5"/><circle cx="611.0" cy="438.7" r="3.5"/><circle cx="618.8" cy="438.7" r="3.5"/><circle cx="422.0" cy="228.8" r="3.5"/><circle cx="438.8" cy="220.8" r="3.5"/><circle cx="446.8" cy="252.4" r="3.5"/><circle cx="442.7" cy="259.8" r="3.5"/><circle cx="430.7" cy="264.0" r="3.5"/><circle cx="427.7" cy="270.8" r="3.5"/><circle cx="543.8" cy="249.8" r="3.5"/><circle cx="529.0" cy="257.9" r="3.5"/><circle cx="608.8" cy="218.2" r="3.5"/><circle cx="455.8" cy="359.5" r="3.5"/><circle cx="471.8" cy="356.7" r="3.5"/><circle cx="478.5" cy="354.8" r="3.5"/><circle cx="457.0" cy="369.8" r="3.5"/><circle cx="455.8" cy="375.8" r="3.5"/><circle cx="437.0" cy="382.5" r="3.5"/><circle cx="540.8" cy="364.5" r="3.5"/><circle cx="542.0" cy="365.0" r="3.5"/><circle cx="539.8" cy="365.2" r="3.5"/><circle cx="406.2" cy="15.5" r="3.5"/><circle cx="467.0" cy="6.8" r="3.5"/><circle cx="423.8" cy="46.0" r="3.5"/><circle cx="463.0" cy="81.8" r="3.5"/><circle cx="524.2" cy="94.8" r="3.5"/><circle cx="795.8" cy="30.5" r="3.5"/><circle cx="745.0" cy="59.0" r="3.5"/><circle cx="747.0" cy="59.8" r="3.5"/><circle cx="427.0" cy="193.8" r="3.5"/><circle cx="601.0" cy="200.8" r="3.5"/><circle cx="626.8" cy="276.8" r="3.5"/><circle cx="628.8" cy="278.0" r="3.5"/><circle cx="682.8" cy="279.8" r="3.5"/><circle cx="727.0" cy="282.8" r="3.5"/><circle cx="872.5" cy="37.8" r="3.5"/><circle cx="908.8" cy="36.8" r="3.5"/><circle cx="957.5" cy="31.8" r="3.5"/><circle cx="932.0" cy="20.5" r="3.5"/><circle cx="932.5" cy="23.5" r="3.5"/><circle cx="933.8" cy="28.0" r="3.5"/><circle cx="925.8" cy="28.0" r="3.5"/><circle cx="925.8" cy="34.8" r="3.5"/><circle cx="923.8" cy="40.5" r="3.5"/><circle cx="920.8" cy="41.5" r="3.5"/><circle cx="927.0" cy="42.2" r="3.5"/><circle cx="928.8" cy="49.0" r="3.5"/><circle cx="937.0" cy="47.2" r="3.5"/><circle cx="941.2" cy="50.5" r="3.5"/><circle cx="938.8" cy="52.2" r="3.5"/><circle cx="936.8" cy="61.8" r="3.5"/><circle cx="886.8" cy="93.8" r="3.5"/><circle cx="947.8" cy="98.8" r="3.5"/><circle cx="915.8" cy="105.5" r="3.5"/><circle cx="914.8" cy="108.2" r="3.5"/><circle cx="813.0" cy="109.0" r="3.5"/><circle cx="826.8" cy="155.5" r="3.5"/><circle cx="834.5" cy="158.8" r="3.5"/><circle cx="838.8" cy="168.8" r="3.5"/><circle cx="847.0" cy="176.8" r="3.5"/><circle cx="830.8" cy="179.8" r="3.5"/><circle cx="823.8" cy="189.8" r="3.5"/><circle cx="878.8" cy="173.8" r="3.5"/><circle cx="939.0" cy="202.8" r="3.5"/><circle cx="425.8" cy="412.2" r="3.5"/><circle cx="422.8" cy="415.2" r="3.5"/><circle cx="415.2" cy="452.0" r="3.5"/><circle cx="75.4" cy="837.0" r="3.5"/><circle cx="76.7" cy="836.4" r="3.5"/><circle cx="75.0" cy="838.5" r="3.5"/><circle cx="77.1" cy="841.8" r="3.5"/><circle cx="90.0" cy="849.8" r="3.5"/><circle cx="1.0" cy="860.6" r="3.5"/><circle cx="25.0" cy="877.7" r="3.5"/><circle cx="16.0" cy="883.7" r="3.5"/><circle cx="6.9" cy="887.9" r="3.5"/><circle cx="8.3" cy="893.9" r="3.5"/><circle cx="6.9" cy="895.6" r="3.5"/><circle cx="16.0" cy="895.8" r="3.5"/><circle cx="10.0" cy="902.7" r="3.5"/><circle cx="9.8" cy="908.9" r="3.5"/><circle cx="110.8" cy="880.0" r="3.5"/><circle cx="39.0" cy="924.8" r="3.5"/><circle cx="49.0" cy="957.9" r="3.5"/><circle cx="7.9" cy="985.8" r="3.5"/><circle cx="241.7" cy="902.9" r="3.5"/><circle cx="230.8" cy="927.9" r="3.5"/><circle cx="235.0" cy="925.2" r="3.5"/><circle cx="239.0" cy="927.9" r="3.5"/><circle cx="177.7" cy="948.7" r="3.5"/><circle cx="200.8" cy="948.7" r="3.5"/><circle cx="164.8" cy="984.8" r="3.5"/><circle cx="199.8" cy="988.5" r="3.5"/><circle cx="365.0" cy="888.7" r="3.5"/><circle cx="619.8" cy="895.0" r="3.5"/><circle cx="624.0" cy="895.8" r="3.5"/><circle cx="737.1" cy="896.0" r="3.5"/><circle cx="744.2" cy="896.8" r="3.5"/><circle cx="1015.8" cy="828.9" r="3.5"/><circle cx="1062.9" cy="849.8" r="3.5"/><circle cx="1174.0" cy="822.9" r="3.5"/><circle cx="1006.9" cy="890.8" r="3.5"/><circle cx="1055.0" cy="905.0" r="3.5"/><circle cx="1167.9" cy="918.7" r="3.5"/><circle cx="1174.6" cy="933.9" r="3.5"/><circle cx="1171.9" cy="939.1" r="3.5"/><circle cx="1175.0" cy="937.7" r="3.5"/><circle cx="1186.0" cy="939.8" r="3.5"/><circle cx="1128.8" cy="952.9" r="3.5"/><circle cx="1175.8" cy="970.8" r="3.5"/><circle cx="808.8" cy="985.8" r="3.5"/><circle cx="750.0" cy="475.7" r="3.5"/><circle cx="721.8" cy="122.8" r="3.5"/><circle cx="380.8" cy="41.3" r="3.5"/><circle cx="385.8" cy="41.5" r="3.5"/><circle cx="375.0" cy="45.0" r="3.5"/></g></svg></div>
<div class="a menu" style="left:225px;top:218px;width:470px;height:525px">
<div class="a" style="left:-1px;top:441px;width:471px;height:27px;background:#308cc6;border-top:1px solid #2a74a6;border-bottom:1px solid #2a74a6"></div>
<div class="a mi" style="top:4px;color:#000;left:27px;font-size:15px;letter-spacing:-0.209px;">Auf den Layer <u>z</u>oomen</div>
<div class="a mi" style="top:31px;color:#bdbdbd;left:27px;font-size:15px;letter-spacing:-0.004px;">Zur Auswahl <u>z</u>oomen</div>
<div class="a mi" style="top:58px;color:#000;left:27px;font-size:15px;letter-spacing:-0.147px;"><u>I</u>n der Übersicht anzeigen</div>
<div class="a mi" style="top:85px;color:#000;left:27px;font-size:15px;letter-spacing:-0.100px;">Objektanzahl anzeigen</div>
<div class="a mi" style="top:112px;color:#000;left:27px;font-size:15px;letter-spacing:-0.177px;">Layer kopieren</div>
<div class="a mi" style="top:139px;color:#000;left:27px;font-size:15px;letter-spacing:-0.189px;">Layer umbe<u>n</u>ennen</div>
<div class="a mi" style="top:168px;color:#000;left:27px;font-size:15px;letter-spacing:-0.102px;">Layer <u>d</u>uplizieren</div>
<div class="a mi" style="top:195px;color:#000;left:27px;font-size:15px;letter-spacing:-0.260px;">Layer <u>l</u>öschen…</div>
<div class="a mi" style="top:224px;color:#000;left:27px;font-size:15px;letter-spacing:-0.154px;">Nach <u>u</u>nten schieben</div>
<div class="a mi" style="top:253px;color:#000;left:27px;font-size:15px;letter-spacing:0.292px;"><u>A</u>ttributtabelle öffnen</div>
<div class="a mi" style="top:280px;color:#000;left:27px;font-size:15px;letter-spacing:0.016px;">Bearbeitungsstatus umschalten</div>
<div class="a mi" style="top:307px;color:#000;left:27px;font-size:15px;letter-spacing:0.060px;"><u>F</u>ilter…</div>
<div class="a mi" style="top:334px;color:#000;left:27px;font-size:15px;letter-spacing:-0.049px;">Datenquelle ändern…</div>
<div class="a mi" style="top:363px;color:#000;left:27px;font-size:15px;letter-spacing:-0.129px;">Maßstabsabhängige <u>S</u>ichtbarkeit des/der Layer setzen…</div>
<div class="a mi" style="top:390px;color:#000;left:27px;font-size:15px;letter-spacing:-0.488px;">KBS setzen</div>
<div class="a" style="left:458px;top:395px;width:0;height:0;border-top:4px solid transparent;border-bottom:4px solid transparent;border-left:5px solid #4d4d4d"></div>
<div class="a mi" style="top:419px;color:#000;left:27px;font-size:15px;letter-spacing:-0.127px;">Permanent machen…</div>
<div class="a mi" style="top:446px;color:#fff;left:27px;font-size:15px;letter-spacing:0.004px;">Exportieren</div>
<div class="a" style="left:458px;top:451px;width:0;height:0;border-top:4px solid transparent;border-bottom:4px solid transparent;border-left:5px solid #b5d5ec"></div>
<div class="a mi" style="top:475px;color:#000;left:27px;font-size:15px;letter-spacing:-0.086px;">Stile</div>
<div class="a" style="left:458px;top:480px;width:0;height:0;border-top:4px solid transparent;border-bottom:4px solid transparent;border-left:5px solid #4d4d4d"></div>
<div class="a mi" style="top:502px;color:#000;left:27px;font-size:15px;letter-spacing:-0.112px;">Eige<u>n</u>schaften…</div>
<div class="msep" style="top:162px"></div>
<div class="msep" style="top:217px"></div>
<div class="msep" style="top:246px"></div>
<div class="msep" style="top:357px"></div>
<div class="msep" style="top:413px"></div>
<svg class="ic16" style="left:6px;top:5px" viewBox="0 0 16 16"><rect x="1" y="1.500" width="8" height="9" fill="#e4e4e4" stroke="#b4b4b4" stroke-width=".8"/><path d="M5.800 10.200L1.300 15" stroke="#6a5a1a" stroke-width="2.800" stroke-linecap="round"/><path d="M5.800 10.200L1.300 15" stroke="#e9bd2c" stroke-width="1.700" stroke-linecap="round"/><circle cx="10" cy="6.300" r="5.700" fill="#f5f5f5" stroke="#8a8a8a" stroke-width="1.100"/><path d="M10 1v10.500" stroke="#d4d4d4" stroke-width=".8"/></svg>
<svg class="ic16" style="left:6px;top:32px" viewBox="0 0 16 16" opacity=".32"><rect x="1" y="1.500" width="8" height="9" fill="#e4e4e4" stroke="#b4b4b4" stroke-width=".8"/><path d="M5.800 10.200L1.300 15" stroke="#6a5a1a" stroke-width="2.800" stroke-linecap="round"/><path d="M5.800 10.200L1.300 15" stroke="#e9bd2c" stroke-width="1.700" stroke-linecap="round"/><circle cx="10" cy="6.300" r="5.700" fill="#f5f5f5" stroke="#8a8a8a" stroke-width="1.100"/><path d="M10 1v10.500" stroke="#d4d4d4" stroke-width=".8"/></svg>
<svg class="ic16" style="left:6px;top:59px" viewBox="0 0 16 16"><path d="M.6 3.200h14.800" stroke="#111" stroke-width="1.200"/><path d="M1.200 3.300h6c0 2.600-.8 5-3.200 5s-2.800-2.400-2.800-5zM8.800 3.300h6c0 2.600-.6 5-2.800 5s-3.200-2.400-3.200-5z" fill="#fff" stroke="#111" stroke-width="1.200"/><rect x="9.200" y="9.200" width="6.300" height="6.300" rx="1.400" fill="#5aa05a" stroke="#2f6f2f" stroke-width=".5"/><path d="M12.350 10.600v3.500M10.600 12.350h3.500" stroke="#fff" stroke-width="1.200"/></svg>
<div class="a" style="left:7px;top:87px;width:14px;height:14px;background:#fff;border:1px solid #c4c4c4"></div>
<svg class="ic16" style="left:6px;top:169px" viewBox="0 0 16 16"><path d="M1.500 4.500h9.500v9.500H1.500z" fill="#d9d9d9" stroke="#6a6a6a"/><path d="M3.500 2h10.500v10.500H3.500z" fill="#f4f4f4" stroke="#6a6a6a"/><rect x="10" y="10" width="5" height="5" rx="1" fill="#f3d648" stroke="#c9a70c" stroke-width=".8"/></svg>
<svg class="ic16" style="left:6px;top:196px" viewBox="0 0 16 16"><rect x="1.500" y="1.500" width="11" height="11" fill="#f7f7f7" stroke="#6a6a6a" stroke-width="1.100"/><rect x="9.500" y="11" width="6" height="4" rx="1.300" fill="#e8324a"/><path d="M10.800 13h3.400" stroke="#fff" stroke-width="1.100"/></svg>
<svg class="ic16" style="left:6px;top:254px" viewBox="0 0 16 16"><rect x=".8" y="1.300" width="14.400" height="13.400" rx="1" fill="#e8f0fa" stroke="#9db9dc" stroke-width="1"/><rect x=".8" y="1.300" width="14.400" height="3" fill="#8fb3de"/><path d="M2.500 6.500h2M6 6.500h8M2.500 9h2M6 9h8M2.500 11.500h2M6 11.500h8" stroke="#8fb3de" stroke-width="1.300"/></svg>
<svg class="ic16" style="left:6px;top:281px" viewBox="0 0 16 16"><path d="M11 .8l2.600 1.200L6.200 13 3.400 15.200 3.600 11.800z" fill="#f0d94a" stroke="#9a8a2a" stroke-width=".6"/><path d="M3.600 11.800l2.600 1.200-2.800 2.200z" fill="#c9b7a0"/><path d="M3.400 15.200l.1-1.300 1 .5z" fill="#333"/><path d="M12 1.300L4.800 12.400" stroke="#c5ab1a" stroke-width=".8"/></svg>
<svg class="ic16" style="left:6px;top:420px" viewBox="0 0 16 16"><rect x="1" y="1" width="14" height="14" rx="2" fill="#6f8fbf" stroke="#50709f" stroke-width=".6"/><rect x="3.200" y="1.800" width="9.600" height="5" fill="#e6e6e6"/><rect x="3.200" y="3.300" width="9.600" height="1" fill="#bdbdbd"/><rect x="3.500" y="9.500" width="9" height="5" fill="#fafafa"/><rect x="4.800" y="10.800" width="2.400" height="2.800" fill="#50709f"/></svg>
</div>
<div class="a menu" style="left:694px;top:660px;width:308px;height:108px">
<div class="a" style="left:-1px;top:-1px;width:308px;height:27px;border-left:1px solid #2a74a6;border-right:1px solid #2a74a6;background:#308cc6;border-top:1px solid #2a74a6;border-bottom:1px solid #2a74a6"></div>
<div class="a mi" style="left:27px;top:3px;color:#fff;font-size:15px;letter-spacing:-0.157px;">Objekte speichern als…</div>
<div class="a mi" style="left:27px;top:30px;color:#bdbdbd;font-size:15px;letter-spacing:-0.119px;">Gewählte Objekte speichern als…</div>
<div class="a mi" style="left:27px;top:57px;color:#000;font-size:15px;letter-spacing:-0.058px;">Als Layerdefinitionsdatei speichern…</div>
<div class="a mi" style="left:27px;top:84px;color:#000;font-size:15px;letter-spacing:-0.144px;">Als QGIS-Layerstildatei speichern…</div>
</div>
<svg class="a" style="left:859px;top:675px" width="16" height="24" viewBox="0 0 16 24"><path d="M1.600 .8L1.600 18 5.400 14.600 7.800 19.600 10.400 18.200 8.200 13.300 13.200 13.300Z" fill="#000" stroke="#fff" stroke-width="1.100" stroke-linejoin="round"/></svg>
<div class="a inp" style="left:4px;top:1170px;width:318px;height:26px"></div>
<svg class="a" style="left:12px;top:1176px" width="14" height="14" viewBox="0 0 14 14"><circle cx="5.600" cy="5.600" r="4" fill="none" stroke="#8c8c8c" stroke-width="1.300"/><path d="M8.600 8.600L12.500 12.500" stroke="#8c8c8c" stroke-width="1.500"/></svg>
<div class="a" style="left:33px;top:1174px;color:#8f8f8f;line-height:18px;font-size:15px;letter-spacing:-0.181px;">Zu suchender Typ (Strg+K)</div>
<div class="a sb" style="left:330.0px;top:1176px;color:#000;font-size:12.5px;letter-spacing:-0.285px;">Bearbeitungsstatus des aktuellen Layers umschalten</div>
<div class="a sb" style="left:981.2px;top:1176px;color:#000;font-size:12.5px;letter-spacing:-0.216px;">Koordinate</div>
<div class="a inp" style="left:1044px;top:1172px;width:112px;height:23px"></div>
<div class="a sb" style="left:1052.5px;top:1176px;color:#000;font-size:13px;letter-spacing:-0.724px;">2478334,1155025</div>
<svg class="ic16" style="left:1160px;top:1175px" viewBox="0 0 16 16"><ellipse cx="7" cy="8.500" rx="4.600" ry="6.300" transform="rotate(-28 7 8.500)" fill="#efefef" stroke="#1c1c1c" stroke-width="1.400"/><path d="M2.800 5l7.500 3.500M5.500 2.800l3 6M4 7.500c1.200 2 3.200 3 5.500 2.500" fill="none" stroke="#1c1c1c" stroke-width="1.200"/><circle cx="9" cy="11.500" r="1.500" fill="#fff" stroke="#1c1c1c" stroke-width=".8"/><path d="M12.500 5l2.500-3M13.500 8.500l2-.5" stroke="#555" stroke-width=".9"/></svg>
<div class="a sb" style="left:1189.5px;top:1176px;color:#000;font-size:12.5px;letter-spacing:-0.447px;">Maßstab</div>
<div class="a inp" style="left:1240px;top:1170px;width:100px;height:26px"></div>
<div class="a sb" style="left:1243.0px;top:1176px;color:#000;font-size:13px;letter-spacing:-1.054px;">1:1166252</div>
<div class="a" style="left:1319px;top:1172px;width:1px;height:23px;background:#c9c9c9"></div>
<div class="dd" style="left:1325px;top:1182px"></div>
<svg class="ic16" style="left:1350px;top:1175px" viewBox="0 0 16 16"><path d="M4.500 7V5a3.500 3.500 0 0 1 7 0v2" fill="none" stroke="#7a7a7a" stroke-width="1.600"/><rect x="2.500" y="7" width="11" height="8" rx="1.300" fill="#6e6e6e"/></svg>
<div class="a sb" style="left:1373.0px;top:1176px;color:#000;font-size:12.5px;letter-spacing:-0.286px;">Vergrößerung</div>
<div class="a inp" style="left:1451px;top:1171px;width:95px;height:25px"></div><div class="a sb" style="left:1456.2px;top:1176px;font-size:13px;letter-spacing:-0.612px;">100%</div><div class="a" style="left:1531px;top:1172px;width:1px;height:23px;background:#c9c9c9"></div><div class="a" style="left:1535px;top:1177px;width:0;height:0;border-left:3.500px solid transparent;border-right:3.500px solid transparent;border-bottom:4px solid #4d4d4d"></div><div class="a" style="left:1535px;top:1187px;width:0;height:0;border-left:3.500px solid transparent;border-right:3.500px solid transparent;border-top:4px solid #4d4d4d"></div>
<div class="a sb" style="left:1555.5px;top:1176px;color:#000;font-size:12.5px;letter-spacing:-0.350px;">Drehung</div>
<div class="a inp" style="left:1611px;top:1171px;width:95px;height:25px"></div><div class="a sb" style="left:1616.2px;top:1176px;font-size:13px;letter-spacing:-0.216px;">0,0 °</div><div class="a" style="left:1691px;top:1172px;width:1px;height:23px;background:#c9c9c9"></div><div class="a" style="left:1695px;top:1177px;width:0;height:0;border-left:3.500px solid transparent;border-right:3.500px solid transparent;border-bottom:4px solid #4d4d4d"></div><div class="a" style="left:1695px;top:1187px;width:0;height:0;border-left:3.500px solid transparent;border-right:3.500px solid transparent;border-top:4px solid #4d4d4d"></div>
<svg class="a" style="left:1712px;top:1176px" width="14" height="14" viewBox="0 0 14 14"><rect x=".5" y=".5" width="13" height="13" fill="#fff" stroke="#b5b5b5"/><path d="M3.200 7.200L5.600 10.400 10.600 3.200" fill="none" stroke="#111" stroke-width="1.700"/></svg>
<div class="a sb" style="left:1731.2px;top:1176px;color:#000;font-size:12.5px;letter-spacing:-0.328px;">Zeichnen</div>
<svg class="ic16" style="left:1796px;top:1175px" viewBox="0 0 16 16"><path d="M8 .8L15.300 5v6L8 15.200.7 11V5z" fill="none" stroke="#7a7a7a" stroke-width=".9"/><circle cx="8" cy="8" r="5.800" fill="#fdfdfd" stroke="#6a6a6a" stroke-width="1"/><ellipse cx="8" cy="8" rx="2.600" ry="5.800" fill="none" stroke="#6a6a6a" stroke-width=".9"/><path d="M2.200 8h11.600M3 5.200h10M3 10.800h10" stroke="#6a6a6a" stroke-width=".9"/></svg>
<div class="a sb" style="left:1814.5px;top:1176px;color:#000;font-size:12.5px;letter-spacing:-0.835px;">EPSG:2056</div>
<svg class="ic16" style="left:1897px;top:1176px" viewBox="0 0 16 16"><path d="M8 .8c4.200 0 7.600 2.700 7.600 6.100 0 2-1.200 3.800-3 4.900l1.500 3.600-4.300-2.500c-.6.100-1.200.100-1.800.100C3.800 13 .4 10.300.4 6.900S3.800.8 8 .8z" fill="#5c5c5c"/><circle cx="4.600" cy="6.900" r="1.100" fill="#fff"/><circle cx="8" cy="6.900" r="1.100" fill="#fff"/><circle cx="11.400" cy="6.900" r="1.100" fill="#fff"/></svg>
</body></html>
